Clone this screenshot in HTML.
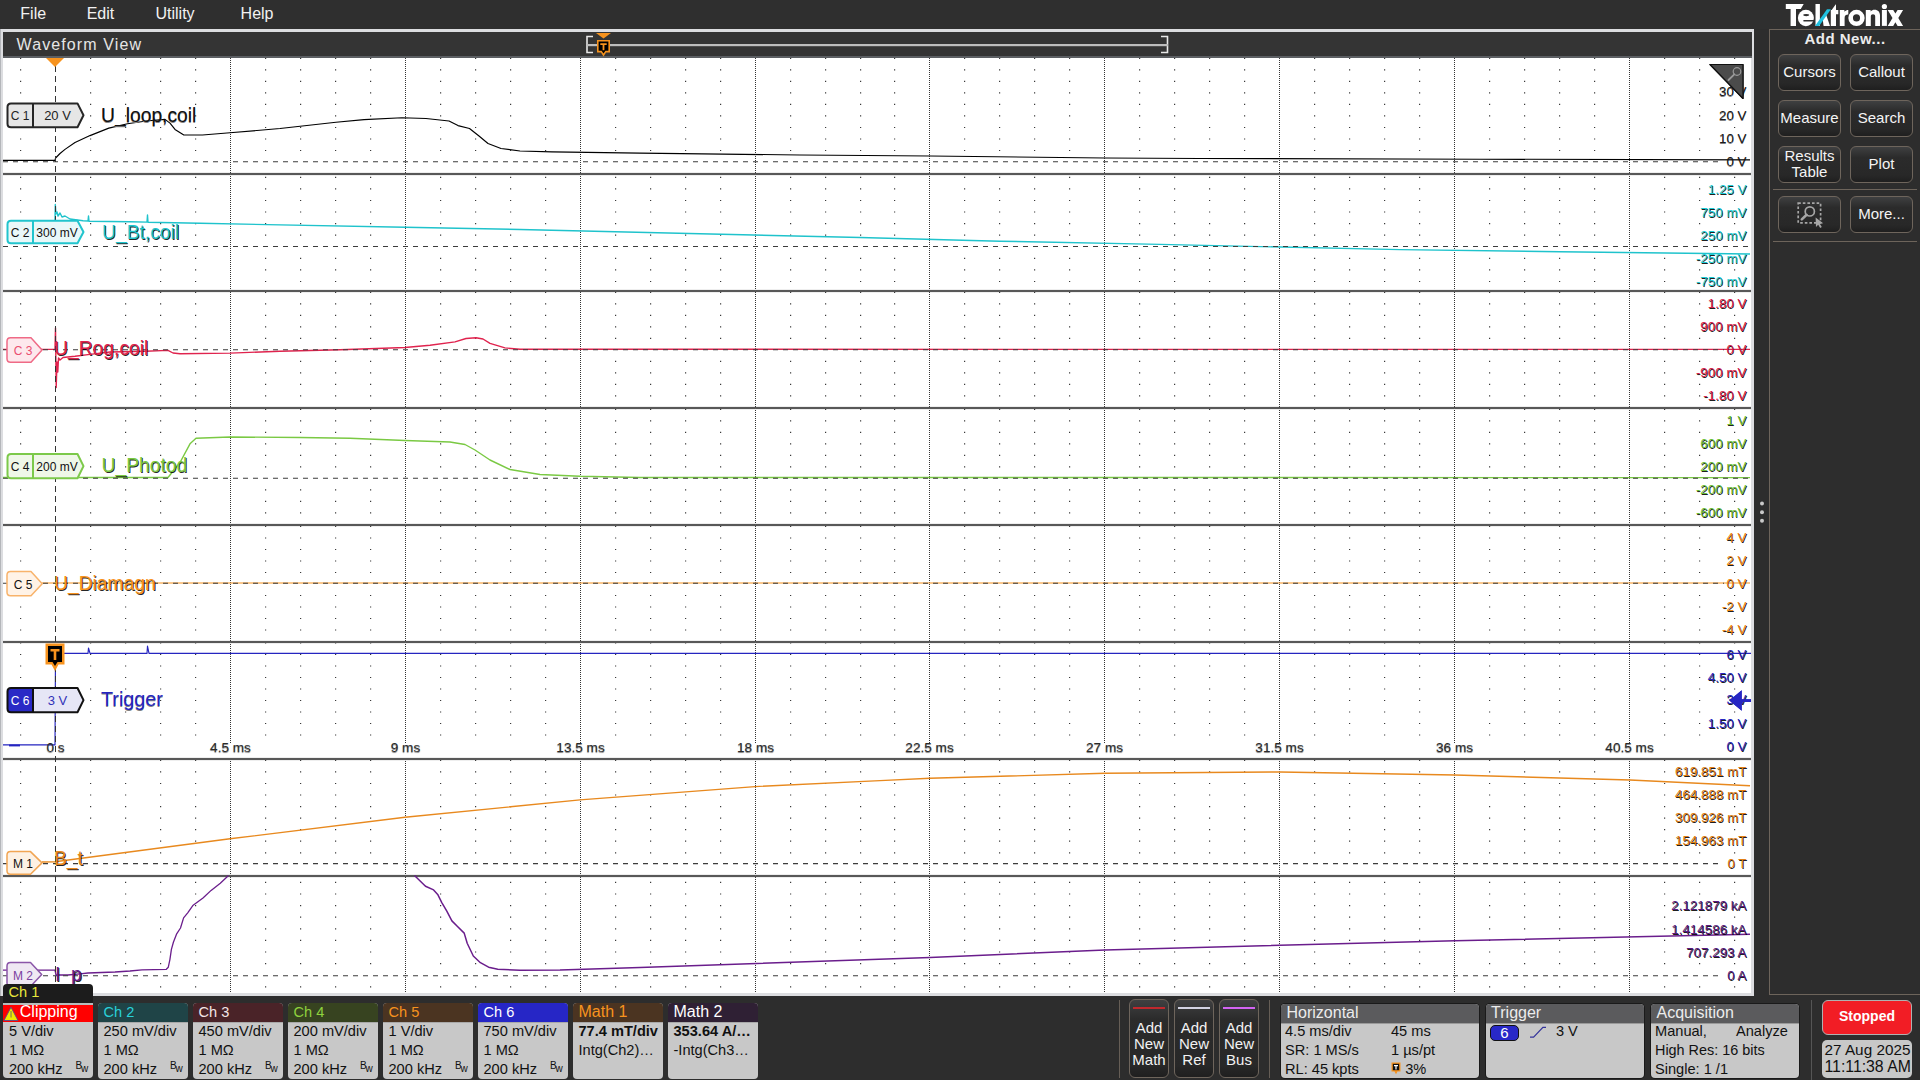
<!DOCTYPE html>
<html><head><meta charset="utf-8"><title>Waveform View</title>
<style>
html,body{margin:0;padding:0}
body{width:1920px;height:1080px;overflow:hidden;position:relative;background:#2d2d2d;font-family:'Liberation Sans', sans-serif}
.t{position:absolute;white-space:nowrap;line-height:1;font-family:'Liberation Sans', sans-serif}
</style></head><body>
<div style="position:absolute;left:0;top:0;width:1920px;height:29px;background:#2f2f2f"></div>
<div class="t" style="left:20.3px;top:6.4px;font-size:16px;color:#f2f2f2;font-weight:normal;">File</div>
<div class="t" style="left:86.7px;top:6.4px;font-size:16px;color:#f2f2f2;font-weight:normal;">Edit</div>
<div class="t" style="left:155.5px;top:6.4px;font-size:16px;color:#f2f2f2;font-weight:normal;">Utility</div>
<div class="t" style="left:240.6px;top:6.4px;font-size:16px;color:#f2f2f2;font-weight:normal;">Help</div>
<svg width="1920" height="30" style="position:absolute;left:0;top:0"><g fill="#ffffff"><path d="M1785.8 4 H1803.7 L1800.8 9.1 H1796 V25.9 H1790.6 V9.1 H1785.8 Z"/><ellipse cx="1805.9" cy="18" rx="8" ry="8.2"/><rect x="1815.5" y="4" width="4.4" height="21.9"/><path d="M1822.6 18.2 L1825.8 13.8 L1830 25.9 H1823.6 Z"/><path d="M1830.8 10 H1831.7 L1835.6 4.6 H1836 V10 H1838.3 V14.2 H1836 V25.9 H1830.8 Z"/><path d="M1839.8 25.9 V10 H1844.4 V11.8 C1845.4 10.4 1846.8 9.9 1848.3 9.9 V14.6 C1846 14.6 1844.6 15.6 1844.6 18 V25.9 Z"/><circle cx="1856.5" cy="17.9" r="5.85" fill="none" stroke="#ffffff" stroke-width="4.6"/><path d="M1865.8 25.9 V10 H1870.6 V11.6 C1871.6 10.4 1873 9.8 1874.6 9.8 C1878 9.8 1880 12 1880 15.6 V25.9 H1875.2 V16.6 C1875.2 15 1874.3 14.2 1873 14.2 C1871.7 14.2 1870.8 15 1870.8 16.6 V25.9 Z"/><rect x="1881.9" y="10" width="5" height="15.9"/><circle cx="1884.4" cy="6.5" r="2.6"/><path d="M1887.7 10 H1893.2 L1895.4 13.6 L1897.6 10 H1903.1 L1898.3 17.95 L1903.1 25.9 H1897.6 L1895.4 22.3 L1893.2 25.9 H1887.7 L1892.5 17.95 Z"/></g><ellipse cx="1806.2" cy="15.1" rx="3.1" ry="1.05" fill="#303030"/><path d="M1803.6 19.9 H1814 V21.5 H1803.6 Q1802.9 20.7 1803.6 19.9 Z" fill="#303030"/><path d="M1827 9.3 H1830.9 L1819.2 25.9 H1815 Z" fill="#1fc0e0"/></svg>
<div style="position:absolute;left:0;top:29px;width:1754px;height:967px;background:#dcdde0"></div>
<div style="position:absolute;left:0;top:29px;width:1px;height:967px;background:#b4b6ba"></div>
<div style="position:absolute;left:3px;top:32px;width:1749px;height:24px;background:#343434"></div>
<div style="position:absolute;left:3px;top:56px;width:1749px;height:2px;background:#5c5f63"></div>
<div style="position:absolute;left:3px;top:58px;width:1748px;height:935px;background:#ffffff"></div>
<div class="t" style="left:16.6px;top:36.7px;font-size:16px;color:#e6e6e6;font-weight:normal;letter-spacing:1.1px">Waveform View</div>
<svg width="1920" height="60" style="position:absolute;left:0;top:0"><path d="M593 36.5 H587 V52.5 H593" fill="none" stroke="#e8e8e8" stroke-width="1.6"/><path d="M1161 36.5 H1167.5 V52.5 H1161" fill="none" stroke="#e8e8e8" stroke-width="1.6"/><rect x="587" y="44" width="581" height="2.2" fill="#bdbdbd"/><path d="M596 33 L611 33 L603.5 38.5 Z" fill="#f7931e"/><path d="M597 40 h13 v12.5 h-4 l-2.5 4 l-2.5 -4 h-4 z" fill="#f7931e"/><path d="M598.6 41.6 h9.8 v9.2 h-3 l-1.9 2.6 l-1.9 -2.6 h-3 z" fill="#000"/><path d="M600.3 43.2 h6.4 v1.8 h-2.3 v5.2 h-1.8 v-5.2 h-2.3 z" fill="#f7931e"/></svg>
<svg width="1920" height="1080" viewBox="0 0 1920 1080" style="position:absolute;left:0;top:0"><defs><clipPath id="pc"><rect x="3" y="58" width="1748" height="935"/></clipPath></defs><g clip-path="url(#pc)"><path d="M20 57.7h1.2v1.2h-1.2zM90 57.7h1.2v1.2h-1.2zM125 57.7h1.2v1.2h-1.2zM160 57.7h1.2v1.2h-1.2zM195 57.7h1.2v1.2h-1.2zM265 57.7h1.2v1.2h-1.2zM300 57.7h1.2v1.2h-1.2zM335 57.7h1.2v1.2h-1.2zM370 57.7h1.2v1.2h-1.2zM440 57.7h1.2v1.2h-1.2zM475 57.7h1.2v1.2h-1.2zM510 57.7h1.2v1.2h-1.2zM545 57.7h1.2v1.2h-1.2zM615 57.7h1.2v1.2h-1.2zM650 57.7h1.2v1.2h-1.2zM685 57.7h1.2v1.2h-1.2zM720 57.7h1.2v1.2h-1.2zM790 57.7h1.2v1.2h-1.2zM825 57.7h1.2v1.2h-1.2zM860 57.7h1.2v1.2h-1.2zM894 57.7h1.2v1.2h-1.2zM964 57.7h1.2v1.2h-1.2zM999 57.7h1.2v1.2h-1.2zM1034 57.7h1.2v1.2h-1.2zM1069 57.7h1.2v1.2h-1.2zM1139 57.7h1.2v1.2h-1.2zM1174 57.7h1.2v1.2h-1.2zM1209 57.7h1.2v1.2h-1.2zM1244 57.7h1.2v1.2h-1.2zM1314 57.7h1.2v1.2h-1.2zM1349 57.7h1.2v1.2h-1.2zM1384 57.7h1.2v1.2h-1.2zM1419 57.7h1.2v1.2h-1.2zM1489 57.7h1.2v1.2h-1.2zM1524 57.7h1.2v1.2h-1.2zM1559 57.7h1.2v1.2h-1.2zM1594 57.7h1.2v1.2h-1.2zM1664 57.7h1.2v1.2h-1.2zM1699 57.7h1.2v1.2h-1.2zM1734 57.7h1.2v1.2h-1.2zM20 69.2h1.2v1.2h-1.2zM90 69.2h1.2v1.2h-1.2zM125 69.2h1.2v1.2h-1.2zM160 69.2h1.2v1.2h-1.2zM195 69.2h1.2v1.2h-1.2zM265 69.2h1.2v1.2h-1.2zM300 69.2h1.2v1.2h-1.2zM335 69.2h1.2v1.2h-1.2zM370 69.2h1.2v1.2h-1.2zM440 69.2h1.2v1.2h-1.2zM475 69.2h1.2v1.2h-1.2zM510 69.2h1.2v1.2h-1.2zM545 69.2h1.2v1.2h-1.2zM615 69.2h1.2v1.2h-1.2zM650 69.2h1.2v1.2h-1.2zM685 69.2h1.2v1.2h-1.2zM720 69.2h1.2v1.2h-1.2zM790 69.2h1.2v1.2h-1.2zM825 69.2h1.2v1.2h-1.2zM860 69.2h1.2v1.2h-1.2zM894 69.2h1.2v1.2h-1.2zM964 69.2h1.2v1.2h-1.2zM999 69.2h1.2v1.2h-1.2zM1034 69.2h1.2v1.2h-1.2zM1069 69.2h1.2v1.2h-1.2zM1139 69.2h1.2v1.2h-1.2zM1174 69.2h1.2v1.2h-1.2zM1209 69.2h1.2v1.2h-1.2zM1244 69.2h1.2v1.2h-1.2zM1314 69.2h1.2v1.2h-1.2zM1349 69.2h1.2v1.2h-1.2zM1384 69.2h1.2v1.2h-1.2zM1419 69.2h1.2v1.2h-1.2zM1489 69.2h1.2v1.2h-1.2zM1524 69.2h1.2v1.2h-1.2zM1559 69.2h1.2v1.2h-1.2zM1594 69.2h1.2v1.2h-1.2zM1664 69.2h1.2v1.2h-1.2zM1699 69.2h1.2v1.2h-1.2zM1734 69.2h1.2v1.2h-1.2zM20 80.8h1.2v1.2h-1.2zM90 80.8h1.2v1.2h-1.2zM125 80.8h1.2v1.2h-1.2zM160 80.8h1.2v1.2h-1.2zM195 80.8h1.2v1.2h-1.2zM265 80.8h1.2v1.2h-1.2zM300 80.8h1.2v1.2h-1.2zM335 80.8h1.2v1.2h-1.2zM370 80.8h1.2v1.2h-1.2zM440 80.8h1.2v1.2h-1.2zM475 80.8h1.2v1.2h-1.2zM510 80.8h1.2v1.2h-1.2zM545 80.8h1.2v1.2h-1.2zM615 80.8h1.2v1.2h-1.2zM650 80.8h1.2v1.2h-1.2zM685 80.8h1.2v1.2h-1.2zM720 80.8h1.2v1.2h-1.2zM790 80.8h1.2v1.2h-1.2zM825 80.8h1.2v1.2h-1.2zM860 80.8h1.2v1.2h-1.2zM894 80.8h1.2v1.2h-1.2zM964 80.8h1.2v1.2h-1.2zM999 80.8h1.2v1.2h-1.2zM1034 80.8h1.2v1.2h-1.2zM1069 80.8h1.2v1.2h-1.2zM1139 80.8h1.2v1.2h-1.2zM1174 80.8h1.2v1.2h-1.2zM1209 80.8h1.2v1.2h-1.2zM1244 80.8h1.2v1.2h-1.2zM1314 80.8h1.2v1.2h-1.2zM1349 80.8h1.2v1.2h-1.2zM1384 80.8h1.2v1.2h-1.2zM1419 80.8h1.2v1.2h-1.2zM1489 80.8h1.2v1.2h-1.2zM1524 80.8h1.2v1.2h-1.2zM1559 80.8h1.2v1.2h-1.2zM1594 80.8h1.2v1.2h-1.2zM1664 80.8h1.2v1.2h-1.2zM1699 80.8h1.2v1.2h-1.2zM1734 80.8h1.2v1.2h-1.2zM20 92.3h1.2v1.2h-1.2zM90 92.3h1.2v1.2h-1.2zM125 92.3h1.2v1.2h-1.2zM160 92.3h1.2v1.2h-1.2zM195 92.3h1.2v1.2h-1.2zM265 92.3h1.2v1.2h-1.2zM300 92.3h1.2v1.2h-1.2zM335 92.3h1.2v1.2h-1.2zM370 92.3h1.2v1.2h-1.2zM440 92.3h1.2v1.2h-1.2zM475 92.3h1.2v1.2h-1.2zM510 92.3h1.2v1.2h-1.2zM545 92.3h1.2v1.2h-1.2zM615 92.3h1.2v1.2h-1.2zM650 92.3h1.2v1.2h-1.2zM685 92.3h1.2v1.2h-1.2zM720 92.3h1.2v1.2h-1.2zM790 92.3h1.2v1.2h-1.2zM825 92.3h1.2v1.2h-1.2zM860 92.3h1.2v1.2h-1.2zM894 92.3h1.2v1.2h-1.2zM964 92.3h1.2v1.2h-1.2zM999 92.3h1.2v1.2h-1.2zM1034 92.3h1.2v1.2h-1.2zM1069 92.3h1.2v1.2h-1.2zM1139 92.3h1.2v1.2h-1.2zM1174 92.3h1.2v1.2h-1.2zM1209 92.3h1.2v1.2h-1.2zM1244 92.3h1.2v1.2h-1.2zM1314 92.3h1.2v1.2h-1.2zM1349 92.3h1.2v1.2h-1.2zM1384 92.3h1.2v1.2h-1.2zM1419 92.3h1.2v1.2h-1.2zM1489 92.3h1.2v1.2h-1.2zM1524 92.3h1.2v1.2h-1.2zM1559 92.3h1.2v1.2h-1.2zM1594 92.3h1.2v1.2h-1.2zM1664 92.3h1.2v1.2h-1.2zM1699 92.3h1.2v1.2h-1.2zM20 103.8h1.2v1.2h-1.2zM90 103.8h1.2v1.2h-1.2zM125 103.8h1.2v1.2h-1.2zM160 103.8h1.2v1.2h-1.2zM195 103.8h1.2v1.2h-1.2zM265 103.8h1.2v1.2h-1.2zM300 103.8h1.2v1.2h-1.2zM335 103.8h1.2v1.2h-1.2zM370 103.8h1.2v1.2h-1.2zM440 103.8h1.2v1.2h-1.2zM475 103.8h1.2v1.2h-1.2zM510 103.8h1.2v1.2h-1.2zM545 103.8h1.2v1.2h-1.2zM615 103.8h1.2v1.2h-1.2zM650 103.8h1.2v1.2h-1.2zM685 103.8h1.2v1.2h-1.2zM720 103.8h1.2v1.2h-1.2zM790 103.8h1.2v1.2h-1.2zM825 103.8h1.2v1.2h-1.2zM860 103.8h1.2v1.2h-1.2zM894 103.8h1.2v1.2h-1.2zM964 103.8h1.2v1.2h-1.2zM999 103.8h1.2v1.2h-1.2zM1034 103.8h1.2v1.2h-1.2zM1069 103.8h1.2v1.2h-1.2zM1139 103.8h1.2v1.2h-1.2zM1174 103.8h1.2v1.2h-1.2zM1209 103.8h1.2v1.2h-1.2zM1244 103.8h1.2v1.2h-1.2zM1314 103.8h1.2v1.2h-1.2zM1349 103.8h1.2v1.2h-1.2zM1384 103.8h1.2v1.2h-1.2zM1419 103.8h1.2v1.2h-1.2zM1489 103.8h1.2v1.2h-1.2zM1524 103.8h1.2v1.2h-1.2zM1559 103.8h1.2v1.2h-1.2zM1594 103.8h1.2v1.2h-1.2zM1664 103.8h1.2v1.2h-1.2zM1699 103.8h1.2v1.2h-1.2zM1734 103.8h1.2v1.2h-1.2zM20 115.3h1.2v1.2h-1.2zM90 115.3h1.2v1.2h-1.2zM125 115.3h1.2v1.2h-1.2zM160 115.3h1.2v1.2h-1.2zM195 115.3h1.2v1.2h-1.2zM265 115.3h1.2v1.2h-1.2zM300 115.3h1.2v1.2h-1.2zM335 115.3h1.2v1.2h-1.2zM370 115.3h1.2v1.2h-1.2zM440 115.3h1.2v1.2h-1.2zM475 115.3h1.2v1.2h-1.2zM510 115.3h1.2v1.2h-1.2zM545 115.3h1.2v1.2h-1.2zM615 115.3h1.2v1.2h-1.2zM650 115.3h1.2v1.2h-1.2zM685 115.3h1.2v1.2h-1.2zM720 115.3h1.2v1.2h-1.2zM790 115.3h1.2v1.2h-1.2zM825 115.3h1.2v1.2h-1.2zM860 115.3h1.2v1.2h-1.2zM894 115.3h1.2v1.2h-1.2zM964 115.3h1.2v1.2h-1.2zM999 115.3h1.2v1.2h-1.2zM1034 115.3h1.2v1.2h-1.2zM1069 115.3h1.2v1.2h-1.2zM1139 115.3h1.2v1.2h-1.2zM1174 115.3h1.2v1.2h-1.2zM1209 115.3h1.2v1.2h-1.2zM1244 115.3h1.2v1.2h-1.2zM1314 115.3h1.2v1.2h-1.2zM1349 115.3h1.2v1.2h-1.2zM1384 115.3h1.2v1.2h-1.2zM1419 115.3h1.2v1.2h-1.2zM1489 115.3h1.2v1.2h-1.2zM1524 115.3h1.2v1.2h-1.2zM1559 115.3h1.2v1.2h-1.2zM1594 115.3h1.2v1.2h-1.2zM1664 115.3h1.2v1.2h-1.2zM1699 115.3h1.2v1.2h-1.2zM20 126.9h1.2v1.2h-1.2zM90 126.9h1.2v1.2h-1.2zM125 126.9h1.2v1.2h-1.2zM160 126.9h1.2v1.2h-1.2zM195 126.9h1.2v1.2h-1.2zM265 126.9h1.2v1.2h-1.2zM300 126.9h1.2v1.2h-1.2zM335 126.9h1.2v1.2h-1.2zM370 126.9h1.2v1.2h-1.2zM440 126.9h1.2v1.2h-1.2zM475 126.9h1.2v1.2h-1.2zM510 126.9h1.2v1.2h-1.2zM545 126.9h1.2v1.2h-1.2zM615 126.9h1.2v1.2h-1.2zM650 126.9h1.2v1.2h-1.2zM685 126.9h1.2v1.2h-1.2zM720 126.9h1.2v1.2h-1.2zM790 126.9h1.2v1.2h-1.2zM825 126.9h1.2v1.2h-1.2zM860 126.9h1.2v1.2h-1.2zM894 126.9h1.2v1.2h-1.2zM964 126.9h1.2v1.2h-1.2zM999 126.9h1.2v1.2h-1.2zM1034 126.9h1.2v1.2h-1.2zM1069 126.9h1.2v1.2h-1.2zM1139 126.9h1.2v1.2h-1.2zM1174 126.9h1.2v1.2h-1.2zM1209 126.9h1.2v1.2h-1.2zM1244 126.9h1.2v1.2h-1.2zM1314 126.9h1.2v1.2h-1.2zM1349 126.9h1.2v1.2h-1.2zM1384 126.9h1.2v1.2h-1.2zM1419 126.9h1.2v1.2h-1.2zM1489 126.9h1.2v1.2h-1.2zM1524 126.9h1.2v1.2h-1.2zM1559 126.9h1.2v1.2h-1.2zM1594 126.9h1.2v1.2h-1.2zM1664 126.9h1.2v1.2h-1.2zM1699 126.9h1.2v1.2h-1.2zM1734 126.9h1.2v1.2h-1.2zM20 138.4h1.2v1.2h-1.2zM90 138.4h1.2v1.2h-1.2zM125 138.4h1.2v1.2h-1.2zM160 138.4h1.2v1.2h-1.2zM195 138.4h1.2v1.2h-1.2zM265 138.4h1.2v1.2h-1.2zM300 138.4h1.2v1.2h-1.2zM335 138.4h1.2v1.2h-1.2zM370 138.4h1.2v1.2h-1.2zM440 138.4h1.2v1.2h-1.2zM475 138.4h1.2v1.2h-1.2zM510 138.4h1.2v1.2h-1.2zM545 138.4h1.2v1.2h-1.2zM615 138.4h1.2v1.2h-1.2zM650 138.4h1.2v1.2h-1.2zM685 138.4h1.2v1.2h-1.2zM720 138.4h1.2v1.2h-1.2zM790 138.4h1.2v1.2h-1.2zM825 138.4h1.2v1.2h-1.2zM860 138.4h1.2v1.2h-1.2zM894 138.4h1.2v1.2h-1.2zM964 138.4h1.2v1.2h-1.2zM999 138.4h1.2v1.2h-1.2zM1034 138.4h1.2v1.2h-1.2zM1069 138.4h1.2v1.2h-1.2zM1139 138.4h1.2v1.2h-1.2zM1174 138.4h1.2v1.2h-1.2zM1209 138.4h1.2v1.2h-1.2zM1244 138.4h1.2v1.2h-1.2zM1314 138.4h1.2v1.2h-1.2zM1349 138.4h1.2v1.2h-1.2zM1384 138.4h1.2v1.2h-1.2zM1419 138.4h1.2v1.2h-1.2zM1489 138.4h1.2v1.2h-1.2zM1524 138.4h1.2v1.2h-1.2zM1559 138.4h1.2v1.2h-1.2zM1594 138.4h1.2v1.2h-1.2zM1664 138.4h1.2v1.2h-1.2zM1699 138.4h1.2v1.2h-1.2zM20 149.9h1.2v1.2h-1.2zM90 149.9h1.2v1.2h-1.2zM125 149.9h1.2v1.2h-1.2zM160 149.9h1.2v1.2h-1.2zM195 149.9h1.2v1.2h-1.2zM265 149.9h1.2v1.2h-1.2zM300 149.9h1.2v1.2h-1.2zM335 149.9h1.2v1.2h-1.2zM370 149.9h1.2v1.2h-1.2zM440 149.9h1.2v1.2h-1.2zM475 149.9h1.2v1.2h-1.2zM510 149.9h1.2v1.2h-1.2zM545 149.9h1.2v1.2h-1.2zM615 149.9h1.2v1.2h-1.2zM650 149.9h1.2v1.2h-1.2zM685 149.9h1.2v1.2h-1.2zM720 149.9h1.2v1.2h-1.2zM790 149.9h1.2v1.2h-1.2zM825 149.9h1.2v1.2h-1.2zM860 149.9h1.2v1.2h-1.2zM894 149.9h1.2v1.2h-1.2zM964 149.9h1.2v1.2h-1.2zM999 149.9h1.2v1.2h-1.2zM1034 149.9h1.2v1.2h-1.2zM1069 149.9h1.2v1.2h-1.2zM1139 149.9h1.2v1.2h-1.2zM1174 149.9h1.2v1.2h-1.2zM1209 149.9h1.2v1.2h-1.2zM1244 149.9h1.2v1.2h-1.2zM1314 149.9h1.2v1.2h-1.2zM1349 149.9h1.2v1.2h-1.2zM1384 149.9h1.2v1.2h-1.2zM1419 149.9h1.2v1.2h-1.2zM1489 149.9h1.2v1.2h-1.2zM1524 149.9h1.2v1.2h-1.2zM1559 149.9h1.2v1.2h-1.2zM1594 149.9h1.2v1.2h-1.2zM1664 149.9h1.2v1.2h-1.2zM1699 149.9h1.2v1.2h-1.2zM1734 149.9h1.2v1.2h-1.2zM20 176.7h1.2v1.2h-1.2zM90 176.7h1.2v1.2h-1.2zM125 176.7h1.2v1.2h-1.2zM160 176.7h1.2v1.2h-1.2zM195 176.7h1.2v1.2h-1.2zM265 176.7h1.2v1.2h-1.2zM300 176.7h1.2v1.2h-1.2zM335 176.7h1.2v1.2h-1.2zM370 176.7h1.2v1.2h-1.2zM440 176.7h1.2v1.2h-1.2zM475 176.7h1.2v1.2h-1.2zM510 176.7h1.2v1.2h-1.2zM545 176.7h1.2v1.2h-1.2zM615 176.7h1.2v1.2h-1.2zM650 176.7h1.2v1.2h-1.2zM685 176.7h1.2v1.2h-1.2zM720 176.7h1.2v1.2h-1.2zM790 176.7h1.2v1.2h-1.2zM825 176.7h1.2v1.2h-1.2zM860 176.7h1.2v1.2h-1.2zM894 176.7h1.2v1.2h-1.2zM964 176.7h1.2v1.2h-1.2zM999 176.7h1.2v1.2h-1.2zM1034 176.7h1.2v1.2h-1.2zM1069 176.7h1.2v1.2h-1.2zM1139 176.7h1.2v1.2h-1.2zM1174 176.7h1.2v1.2h-1.2zM1209 176.7h1.2v1.2h-1.2zM1244 176.7h1.2v1.2h-1.2zM1314 176.7h1.2v1.2h-1.2zM1349 176.7h1.2v1.2h-1.2zM1384 176.7h1.2v1.2h-1.2zM1419 176.7h1.2v1.2h-1.2zM1489 176.7h1.2v1.2h-1.2zM1524 176.7h1.2v1.2h-1.2zM1559 176.7h1.2v1.2h-1.2zM1594 176.7h1.2v1.2h-1.2zM1664 176.7h1.2v1.2h-1.2zM1699 176.7h1.2v1.2h-1.2zM1734 176.7h1.2v1.2h-1.2zM20 188.3h1.2v1.2h-1.2zM90 188.3h1.2v1.2h-1.2zM125 188.3h1.2v1.2h-1.2zM160 188.3h1.2v1.2h-1.2zM195 188.3h1.2v1.2h-1.2zM265 188.3h1.2v1.2h-1.2zM300 188.3h1.2v1.2h-1.2zM335 188.3h1.2v1.2h-1.2zM370 188.3h1.2v1.2h-1.2zM440 188.3h1.2v1.2h-1.2zM475 188.3h1.2v1.2h-1.2zM510 188.3h1.2v1.2h-1.2zM545 188.3h1.2v1.2h-1.2zM615 188.3h1.2v1.2h-1.2zM650 188.3h1.2v1.2h-1.2zM685 188.3h1.2v1.2h-1.2zM720 188.3h1.2v1.2h-1.2zM790 188.3h1.2v1.2h-1.2zM825 188.3h1.2v1.2h-1.2zM860 188.3h1.2v1.2h-1.2zM894 188.3h1.2v1.2h-1.2zM964 188.3h1.2v1.2h-1.2zM999 188.3h1.2v1.2h-1.2zM1034 188.3h1.2v1.2h-1.2zM1069 188.3h1.2v1.2h-1.2zM1139 188.3h1.2v1.2h-1.2zM1174 188.3h1.2v1.2h-1.2zM1209 188.3h1.2v1.2h-1.2zM1244 188.3h1.2v1.2h-1.2zM1314 188.3h1.2v1.2h-1.2zM1349 188.3h1.2v1.2h-1.2zM1384 188.3h1.2v1.2h-1.2zM1419 188.3h1.2v1.2h-1.2zM1489 188.3h1.2v1.2h-1.2zM1524 188.3h1.2v1.2h-1.2zM1559 188.3h1.2v1.2h-1.2zM1594 188.3h1.2v1.2h-1.2zM1664 188.3h1.2v1.2h-1.2zM1699 188.3h1.2v1.2h-1.2zM20 199.9h1.2v1.2h-1.2zM90 199.9h1.2v1.2h-1.2zM125 199.9h1.2v1.2h-1.2zM160 199.9h1.2v1.2h-1.2zM195 199.9h1.2v1.2h-1.2zM265 199.9h1.2v1.2h-1.2zM300 199.9h1.2v1.2h-1.2zM335 199.9h1.2v1.2h-1.2zM370 199.9h1.2v1.2h-1.2zM440 199.9h1.2v1.2h-1.2zM475 199.9h1.2v1.2h-1.2zM510 199.9h1.2v1.2h-1.2zM545 199.9h1.2v1.2h-1.2zM615 199.9h1.2v1.2h-1.2zM650 199.9h1.2v1.2h-1.2zM685 199.9h1.2v1.2h-1.2zM720 199.9h1.2v1.2h-1.2zM790 199.9h1.2v1.2h-1.2zM825 199.9h1.2v1.2h-1.2zM860 199.9h1.2v1.2h-1.2zM894 199.9h1.2v1.2h-1.2zM964 199.9h1.2v1.2h-1.2zM999 199.9h1.2v1.2h-1.2zM1034 199.9h1.2v1.2h-1.2zM1069 199.9h1.2v1.2h-1.2zM1139 199.9h1.2v1.2h-1.2zM1174 199.9h1.2v1.2h-1.2zM1209 199.9h1.2v1.2h-1.2zM1244 199.9h1.2v1.2h-1.2zM1314 199.9h1.2v1.2h-1.2zM1349 199.9h1.2v1.2h-1.2zM1384 199.9h1.2v1.2h-1.2zM1419 199.9h1.2v1.2h-1.2zM1489 199.9h1.2v1.2h-1.2zM1524 199.9h1.2v1.2h-1.2zM1559 199.9h1.2v1.2h-1.2zM1594 199.9h1.2v1.2h-1.2zM1664 199.9h1.2v1.2h-1.2zM1699 199.9h1.2v1.2h-1.2zM1734 199.9h1.2v1.2h-1.2zM20 211.4h1.2v1.2h-1.2zM90 211.4h1.2v1.2h-1.2zM125 211.4h1.2v1.2h-1.2zM160 211.4h1.2v1.2h-1.2zM195 211.4h1.2v1.2h-1.2zM265 211.4h1.2v1.2h-1.2zM300 211.4h1.2v1.2h-1.2zM335 211.4h1.2v1.2h-1.2zM370 211.4h1.2v1.2h-1.2zM440 211.4h1.2v1.2h-1.2zM475 211.4h1.2v1.2h-1.2zM510 211.4h1.2v1.2h-1.2zM545 211.4h1.2v1.2h-1.2zM615 211.4h1.2v1.2h-1.2zM650 211.4h1.2v1.2h-1.2zM685 211.4h1.2v1.2h-1.2zM720 211.4h1.2v1.2h-1.2zM790 211.4h1.2v1.2h-1.2zM825 211.4h1.2v1.2h-1.2zM860 211.4h1.2v1.2h-1.2zM894 211.4h1.2v1.2h-1.2zM964 211.4h1.2v1.2h-1.2zM999 211.4h1.2v1.2h-1.2zM1034 211.4h1.2v1.2h-1.2zM1069 211.4h1.2v1.2h-1.2zM1139 211.4h1.2v1.2h-1.2zM1174 211.4h1.2v1.2h-1.2zM1209 211.4h1.2v1.2h-1.2zM1244 211.4h1.2v1.2h-1.2zM1314 211.4h1.2v1.2h-1.2zM1349 211.4h1.2v1.2h-1.2zM1384 211.4h1.2v1.2h-1.2zM1419 211.4h1.2v1.2h-1.2zM1489 211.4h1.2v1.2h-1.2zM1524 211.4h1.2v1.2h-1.2zM1559 211.4h1.2v1.2h-1.2zM1594 211.4h1.2v1.2h-1.2zM1664 211.4h1.2v1.2h-1.2zM20 223.0h1.2v1.2h-1.2zM90 223.0h1.2v1.2h-1.2zM125 223.0h1.2v1.2h-1.2zM160 223.0h1.2v1.2h-1.2zM195 223.0h1.2v1.2h-1.2zM265 223.0h1.2v1.2h-1.2zM300 223.0h1.2v1.2h-1.2zM335 223.0h1.2v1.2h-1.2zM370 223.0h1.2v1.2h-1.2zM440 223.0h1.2v1.2h-1.2zM475 223.0h1.2v1.2h-1.2zM510 223.0h1.2v1.2h-1.2zM545 223.0h1.2v1.2h-1.2zM615 223.0h1.2v1.2h-1.2zM650 223.0h1.2v1.2h-1.2zM685 223.0h1.2v1.2h-1.2zM720 223.0h1.2v1.2h-1.2zM790 223.0h1.2v1.2h-1.2zM825 223.0h1.2v1.2h-1.2zM860 223.0h1.2v1.2h-1.2zM894 223.0h1.2v1.2h-1.2zM964 223.0h1.2v1.2h-1.2zM999 223.0h1.2v1.2h-1.2zM1034 223.0h1.2v1.2h-1.2zM1069 223.0h1.2v1.2h-1.2zM1139 223.0h1.2v1.2h-1.2zM1174 223.0h1.2v1.2h-1.2zM1209 223.0h1.2v1.2h-1.2zM1244 223.0h1.2v1.2h-1.2zM1314 223.0h1.2v1.2h-1.2zM1349 223.0h1.2v1.2h-1.2zM1384 223.0h1.2v1.2h-1.2zM1419 223.0h1.2v1.2h-1.2zM1489 223.0h1.2v1.2h-1.2zM1524 223.0h1.2v1.2h-1.2zM1559 223.0h1.2v1.2h-1.2zM1594 223.0h1.2v1.2h-1.2zM1664 223.0h1.2v1.2h-1.2zM1699 223.0h1.2v1.2h-1.2zM1734 223.0h1.2v1.2h-1.2zM20 234.6h1.2v1.2h-1.2zM90 234.6h1.2v1.2h-1.2zM125 234.6h1.2v1.2h-1.2zM160 234.6h1.2v1.2h-1.2zM195 234.6h1.2v1.2h-1.2zM265 234.6h1.2v1.2h-1.2zM300 234.6h1.2v1.2h-1.2zM335 234.6h1.2v1.2h-1.2zM370 234.6h1.2v1.2h-1.2zM440 234.6h1.2v1.2h-1.2zM475 234.6h1.2v1.2h-1.2zM510 234.6h1.2v1.2h-1.2zM545 234.6h1.2v1.2h-1.2zM615 234.6h1.2v1.2h-1.2zM650 234.6h1.2v1.2h-1.2zM685 234.6h1.2v1.2h-1.2zM720 234.6h1.2v1.2h-1.2zM790 234.6h1.2v1.2h-1.2zM825 234.6h1.2v1.2h-1.2zM860 234.6h1.2v1.2h-1.2zM894 234.6h1.2v1.2h-1.2zM964 234.6h1.2v1.2h-1.2zM999 234.6h1.2v1.2h-1.2zM1034 234.6h1.2v1.2h-1.2zM1069 234.6h1.2v1.2h-1.2zM1139 234.6h1.2v1.2h-1.2zM1174 234.6h1.2v1.2h-1.2zM1209 234.6h1.2v1.2h-1.2zM1244 234.6h1.2v1.2h-1.2zM1314 234.6h1.2v1.2h-1.2zM1349 234.6h1.2v1.2h-1.2zM1384 234.6h1.2v1.2h-1.2zM1419 234.6h1.2v1.2h-1.2zM1489 234.6h1.2v1.2h-1.2zM1524 234.6h1.2v1.2h-1.2zM1559 234.6h1.2v1.2h-1.2zM1594 234.6h1.2v1.2h-1.2zM1664 234.6h1.2v1.2h-1.2zM20 257.8h1.2v1.2h-1.2zM90 257.8h1.2v1.2h-1.2zM125 257.8h1.2v1.2h-1.2zM160 257.8h1.2v1.2h-1.2zM195 257.8h1.2v1.2h-1.2zM265 257.8h1.2v1.2h-1.2zM300 257.8h1.2v1.2h-1.2zM335 257.8h1.2v1.2h-1.2zM370 257.8h1.2v1.2h-1.2zM440 257.8h1.2v1.2h-1.2zM475 257.8h1.2v1.2h-1.2zM510 257.8h1.2v1.2h-1.2zM545 257.8h1.2v1.2h-1.2zM615 257.8h1.2v1.2h-1.2zM650 257.8h1.2v1.2h-1.2zM685 257.8h1.2v1.2h-1.2zM720 257.8h1.2v1.2h-1.2zM790 257.8h1.2v1.2h-1.2zM825 257.8h1.2v1.2h-1.2zM860 257.8h1.2v1.2h-1.2zM894 257.8h1.2v1.2h-1.2zM964 257.8h1.2v1.2h-1.2zM999 257.8h1.2v1.2h-1.2zM1034 257.8h1.2v1.2h-1.2zM1069 257.8h1.2v1.2h-1.2zM1139 257.8h1.2v1.2h-1.2zM1174 257.8h1.2v1.2h-1.2zM1209 257.8h1.2v1.2h-1.2zM1244 257.8h1.2v1.2h-1.2zM1314 257.8h1.2v1.2h-1.2zM1349 257.8h1.2v1.2h-1.2zM1384 257.8h1.2v1.2h-1.2zM1419 257.8h1.2v1.2h-1.2zM1489 257.8h1.2v1.2h-1.2zM1524 257.8h1.2v1.2h-1.2zM1559 257.8h1.2v1.2h-1.2zM1594 257.8h1.2v1.2h-1.2zM1664 257.8h1.2v1.2h-1.2zM20 269.3h1.2v1.2h-1.2zM90 269.3h1.2v1.2h-1.2zM125 269.3h1.2v1.2h-1.2zM160 269.3h1.2v1.2h-1.2zM195 269.3h1.2v1.2h-1.2zM265 269.3h1.2v1.2h-1.2zM300 269.3h1.2v1.2h-1.2zM335 269.3h1.2v1.2h-1.2zM370 269.3h1.2v1.2h-1.2zM440 269.3h1.2v1.2h-1.2zM475 269.3h1.2v1.2h-1.2zM510 269.3h1.2v1.2h-1.2zM545 269.3h1.2v1.2h-1.2zM615 269.3h1.2v1.2h-1.2zM650 269.3h1.2v1.2h-1.2zM685 269.3h1.2v1.2h-1.2zM720 269.3h1.2v1.2h-1.2zM790 269.3h1.2v1.2h-1.2zM825 269.3h1.2v1.2h-1.2zM860 269.3h1.2v1.2h-1.2zM894 269.3h1.2v1.2h-1.2zM964 269.3h1.2v1.2h-1.2zM999 269.3h1.2v1.2h-1.2zM1034 269.3h1.2v1.2h-1.2zM1069 269.3h1.2v1.2h-1.2zM1139 269.3h1.2v1.2h-1.2zM1174 269.3h1.2v1.2h-1.2zM1209 269.3h1.2v1.2h-1.2zM1244 269.3h1.2v1.2h-1.2zM1314 269.3h1.2v1.2h-1.2zM1349 269.3h1.2v1.2h-1.2zM1384 269.3h1.2v1.2h-1.2zM1419 269.3h1.2v1.2h-1.2zM1489 269.3h1.2v1.2h-1.2zM1524 269.3h1.2v1.2h-1.2zM1559 269.3h1.2v1.2h-1.2zM1594 269.3h1.2v1.2h-1.2zM1664 269.3h1.2v1.2h-1.2zM1699 269.3h1.2v1.2h-1.2zM1734 269.3h1.2v1.2h-1.2zM20 280.9h1.2v1.2h-1.2zM90 280.9h1.2v1.2h-1.2zM125 280.9h1.2v1.2h-1.2zM160 280.9h1.2v1.2h-1.2zM195 280.9h1.2v1.2h-1.2zM265 280.9h1.2v1.2h-1.2zM300 280.9h1.2v1.2h-1.2zM335 280.9h1.2v1.2h-1.2zM370 280.9h1.2v1.2h-1.2zM440 280.9h1.2v1.2h-1.2zM475 280.9h1.2v1.2h-1.2zM510 280.9h1.2v1.2h-1.2zM545 280.9h1.2v1.2h-1.2zM615 280.9h1.2v1.2h-1.2zM650 280.9h1.2v1.2h-1.2zM685 280.9h1.2v1.2h-1.2zM720 280.9h1.2v1.2h-1.2zM790 280.9h1.2v1.2h-1.2zM825 280.9h1.2v1.2h-1.2zM860 280.9h1.2v1.2h-1.2zM894 280.9h1.2v1.2h-1.2zM964 280.9h1.2v1.2h-1.2zM999 280.9h1.2v1.2h-1.2zM1034 280.9h1.2v1.2h-1.2zM1069 280.9h1.2v1.2h-1.2zM1139 280.9h1.2v1.2h-1.2zM1174 280.9h1.2v1.2h-1.2zM1209 280.9h1.2v1.2h-1.2zM1244 280.9h1.2v1.2h-1.2zM1314 280.9h1.2v1.2h-1.2zM1349 280.9h1.2v1.2h-1.2zM1384 280.9h1.2v1.2h-1.2zM1419 280.9h1.2v1.2h-1.2zM1489 280.9h1.2v1.2h-1.2zM1524 280.9h1.2v1.2h-1.2zM1559 280.9h1.2v1.2h-1.2zM1594 280.9h1.2v1.2h-1.2zM1664 280.9h1.2v1.2h-1.2zM20 291.8h1.2v1.2h-1.2zM90 291.8h1.2v1.2h-1.2zM125 291.8h1.2v1.2h-1.2zM160 291.8h1.2v1.2h-1.2zM195 291.8h1.2v1.2h-1.2zM265 291.8h1.2v1.2h-1.2zM300 291.8h1.2v1.2h-1.2zM335 291.8h1.2v1.2h-1.2zM370 291.8h1.2v1.2h-1.2zM440 291.8h1.2v1.2h-1.2zM475 291.8h1.2v1.2h-1.2zM510 291.8h1.2v1.2h-1.2zM545 291.8h1.2v1.2h-1.2zM615 291.8h1.2v1.2h-1.2zM650 291.8h1.2v1.2h-1.2zM685 291.8h1.2v1.2h-1.2zM720 291.8h1.2v1.2h-1.2zM790 291.8h1.2v1.2h-1.2zM825 291.8h1.2v1.2h-1.2zM860 291.8h1.2v1.2h-1.2zM894 291.8h1.2v1.2h-1.2zM964 291.8h1.2v1.2h-1.2zM999 291.8h1.2v1.2h-1.2zM1034 291.8h1.2v1.2h-1.2zM1069 291.8h1.2v1.2h-1.2zM1139 291.8h1.2v1.2h-1.2zM1174 291.8h1.2v1.2h-1.2zM1209 291.8h1.2v1.2h-1.2zM1244 291.8h1.2v1.2h-1.2zM1314 291.8h1.2v1.2h-1.2zM1349 291.8h1.2v1.2h-1.2zM1384 291.8h1.2v1.2h-1.2zM1419 291.8h1.2v1.2h-1.2zM1489 291.8h1.2v1.2h-1.2zM1524 291.8h1.2v1.2h-1.2zM1559 291.8h1.2v1.2h-1.2zM1594 291.8h1.2v1.2h-1.2zM1664 291.8h1.2v1.2h-1.2zM1699 291.8h1.2v1.2h-1.2zM1734 291.8h1.2v1.2h-1.2zM20 303.3h1.2v1.2h-1.2zM90 303.3h1.2v1.2h-1.2zM125 303.3h1.2v1.2h-1.2zM160 303.3h1.2v1.2h-1.2zM195 303.3h1.2v1.2h-1.2zM265 303.3h1.2v1.2h-1.2zM300 303.3h1.2v1.2h-1.2zM335 303.3h1.2v1.2h-1.2zM370 303.3h1.2v1.2h-1.2zM440 303.3h1.2v1.2h-1.2zM475 303.3h1.2v1.2h-1.2zM510 303.3h1.2v1.2h-1.2zM545 303.3h1.2v1.2h-1.2zM615 303.3h1.2v1.2h-1.2zM650 303.3h1.2v1.2h-1.2zM685 303.3h1.2v1.2h-1.2zM720 303.3h1.2v1.2h-1.2zM790 303.3h1.2v1.2h-1.2zM825 303.3h1.2v1.2h-1.2zM860 303.3h1.2v1.2h-1.2zM894 303.3h1.2v1.2h-1.2zM964 303.3h1.2v1.2h-1.2zM999 303.3h1.2v1.2h-1.2zM1034 303.3h1.2v1.2h-1.2zM1069 303.3h1.2v1.2h-1.2zM1139 303.3h1.2v1.2h-1.2zM1174 303.3h1.2v1.2h-1.2zM1209 303.3h1.2v1.2h-1.2zM1244 303.3h1.2v1.2h-1.2zM1314 303.3h1.2v1.2h-1.2zM1349 303.3h1.2v1.2h-1.2zM1384 303.3h1.2v1.2h-1.2zM1419 303.3h1.2v1.2h-1.2zM1489 303.3h1.2v1.2h-1.2zM1524 303.3h1.2v1.2h-1.2zM1559 303.3h1.2v1.2h-1.2zM1594 303.3h1.2v1.2h-1.2zM1664 303.3h1.2v1.2h-1.2zM1699 303.3h1.2v1.2h-1.2zM20 314.8h1.2v1.2h-1.2zM90 314.8h1.2v1.2h-1.2zM125 314.8h1.2v1.2h-1.2zM160 314.8h1.2v1.2h-1.2zM195 314.8h1.2v1.2h-1.2zM265 314.8h1.2v1.2h-1.2zM300 314.8h1.2v1.2h-1.2zM335 314.8h1.2v1.2h-1.2zM370 314.8h1.2v1.2h-1.2zM440 314.8h1.2v1.2h-1.2zM475 314.8h1.2v1.2h-1.2zM510 314.8h1.2v1.2h-1.2zM545 314.8h1.2v1.2h-1.2zM615 314.8h1.2v1.2h-1.2zM650 314.8h1.2v1.2h-1.2zM685 314.8h1.2v1.2h-1.2zM720 314.8h1.2v1.2h-1.2zM790 314.8h1.2v1.2h-1.2zM825 314.8h1.2v1.2h-1.2zM860 314.8h1.2v1.2h-1.2zM894 314.8h1.2v1.2h-1.2zM964 314.8h1.2v1.2h-1.2zM999 314.8h1.2v1.2h-1.2zM1034 314.8h1.2v1.2h-1.2zM1069 314.8h1.2v1.2h-1.2zM1139 314.8h1.2v1.2h-1.2zM1174 314.8h1.2v1.2h-1.2zM1209 314.8h1.2v1.2h-1.2zM1244 314.8h1.2v1.2h-1.2zM1314 314.8h1.2v1.2h-1.2zM1349 314.8h1.2v1.2h-1.2zM1384 314.8h1.2v1.2h-1.2zM1419 314.8h1.2v1.2h-1.2zM1489 314.8h1.2v1.2h-1.2zM1524 314.8h1.2v1.2h-1.2zM1559 314.8h1.2v1.2h-1.2zM1594 314.8h1.2v1.2h-1.2zM1664 314.8h1.2v1.2h-1.2zM1699 314.8h1.2v1.2h-1.2zM1734 314.8h1.2v1.2h-1.2zM20 326.3h1.2v1.2h-1.2zM90 326.3h1.2v1.2h-1.2zM125 326.3h1.2v1.2h-1.2zM160 326.3h1.2v1.2h-1.2zM195 326.3h1.2v1.2h-1.2zM265 326.3h1.2v1.2h-1.2zM300 326.3h1.2v1.2h-1.2zM335 326.3h1.2v1.2h-1.2zM370 326.3h1.2v1.2h-1.2zM440 326.3h1.2v1.2h-1.2zM475 326.3h1.2v1.2h-1.2zM510 326.3h1.2v1.2h-1.2zM545 326.3h1.2v1.2h-1.2zM615 326.3h1.2v1.2h-1.2zM650 326.3h1.2v1.2h-1.2zM685 326.3h1.2v1.2h-1.2zM720 326.3h1.2v1.2h-1.2zM790 326.3h1.2v1.2h-1.2zM825 326.3h1.2v1.2h-1.2zM860 326.3h1.2v1.2h-1.2zM894 326.3h1.2v1.2h-1.2zM964 326.3h1.2v1.2h-1.2zM999 326.3h1.2v1.2h-1.2zM1034 326.3h1.2v1.2h-1.2zM1069 326.3h1.2v1.2h-1.2zM1139 326.3h1.2v1.2h-1.2zM1174 326.3h1.2v1.2h-1.2zM1209 326.3h1.2v1.2h-1.2zM1244 326.3h1.2v1.2h-1.2zM1314 326.3h1.2v1.2h-1.2zM1349 326.3h1.2v1.2h-1.2zM1384 326.3h1.2v1.2h-1.2zM1419 326.3h1.2v1.2h-1.2zM1489 326.3h1.2v1.2h-1.2zM1524 326.3h1.2v1.2h-1.2zM1559 326.3h1.2v1.2h-1.2zM1594 326.3h1.2v1.2h-1.2zM1664 326.3h1.2v1.2h-1.2zM20 337.8h1.2v1.2h-1.2zM90 337.8h1.2v1.2h-1.2zM125 337.8h1.2v1.2h-1.2zM160 337.8h1.2v1.2h-1.2zM195 337.8h1.2v1.2h-1.2zM265 337.8h1.2v1.2h-1.2zM300 337.8h1.2v1.2h-1.2zM335 337.8h1.2v1.2h-1.2zM370 337.8h1.2v1.2h-1.2zM440 337.8h1.2v1.2h-1.2zM475 337.8h1.2v1.2h-1.2zM510 337.8h1.2v1.2h-1.2zM545 337.8h1.2v1.2h-1.2zM615 337.8h1.2v1.2h-1.2zM650 337.8h1.2v1.2h-1.2zM685 337.8h1.2v1.2h-1.2zM720 337.8h1.2v1.2h-1.2zM790 337.8h1.2v1.2h-1.2zM825 337.8h1.2v1.2h-1.2zM860 337.8h1.2v1.2h-1.2zM894 337.8h1.2v1.2h-1.2zM964 337.8h1.2v1.2h-1.2zM999 337.8h1.2v1.2h-1.2zM1034 337.8h1.2v1.2h-1.2zM1069 337.8h1.2v1.2h-1.2zM1139 337.8h1.2v1.2h-1.2zM1174 337.8h1.2v1.2h-1.2zM1209 337.8h1.2v1.2h-1.2zM1244 337.8h1.2v1.2h-1.2zM1314 337.8h1.2v1.2h-1.2zM1349 337.8h1.2v1.2h-1.2zM1384 337.8h1.2v1.2h-1.2zM1419 337.8h1.2v1.2h-1.2zM1489 337.8h1.2v1.2h-1.2zM1524 337.8h1.2v1.2h-1.2zM1559 337.8h1.2v1.2h-1.2zM1594 337.8h1.2v1.2h-1.2zM1664 337.8h1.2v1.2h-1.2zM1699 337.8h1.2v1.2h-1.2zM1734 337.8h1.2v1.2h-1.2zM20 360.8h1.2v1.2h-1.2zM90 360.8h1.2v1.2h-1.2zM125 360.8h1.2v1.2h-1.2zM160 360.8h1.2v1.2h-1.2zM195 360.8h1.2v1.2h-1.2zM265 360.8h1.2v1.2h-1.2zM300 360.8h1.2v1.2h-1.2zM335 360.8h1.2v1.2h-1.2zM370 360.8h1.2v1.2h-1.2zM440 360.8h1.2v1.2h-1.2zM475 360.8h1.2v1.2h-1.2zM510 360.8h1.2v1.2h-1.2zM545 360.8h1.2v1.2h-1.2zM615 360.8h1.2v1.2h-1.2zM650 360.8h1.2v1.2h-1.2zM685 360.8h1.2v1.2h-1.2zM720 360.8h1.2v1.2h-1.2zM790 360.8h1.2v1.2h-1.2zM825 360.8h1.2v1.2h-1.2zM860 360.8h1.2v1.2h-1.2zM894 360.8h1.2v1.2h-1.2zM964 360.8h1.2v1.2h-1.2zM999 360.8h1.2v1.2h-1.2zM1034 360.8h1.2v1.2h-1.2zM1069 360.8h1.2v1.2h-1.2zM1139 360.8h1.2v1.2h-1.2zM1174 360.8h1.2v1.2h-1.2zM1209 360.8h1.2v1.2h-1.2zM1244 360.8h1.2v1.2h-1.2zM1314 360.8h1.2v1.2h-1.2zM1349 360.8h1.2v1.2h-1.2zM1384 360.8h1.2v1.2h-1.2zM1419 360.8h1.2v1.2h-1.2zM1489 360.8h1.2v1.2h-1.2zM1524 360.8h1.2v1.2h-1.2zM1559 360.8h1.2v1.2h-1.2zM1594 360.8h1.2v1.2h-1.2zM1664 360.8h1.2v1.2h-1.2zM1699 360.8h1.2v1.2h-1.2zM1734 360.8h1.2v1.2h-1.2zM20 372.3h1.2v1.2h-1.2zM90 372.3h1.2v1.2h-1.2zM125 372.3h1.2v1.2h-1.2zM160 372.3h1.2v1.2h-1.2zM195 372.3h1.2v1.2h-1.2zM265 372.3h1.2v1.2h-1.2zM300 372.3h1.2v1.2h-1.2zM335 372.3h1.2v1.2h-1.2zM370 372.3h1.2v1.2h-1.2zM440 372.3h1.2v1.2h-1.2zM475 372.3h1.2v1.2h-1.2zM510 372.3h1.2v1.2h-1.2zM545 372.3h1.2v1.2h-1.2zM615 372.3h1.2v1.2h-1.2zM650 372.3h1.2v1.2h-1.2zM685 372.3h1.2v1.2h-1.2zM720 372.3h1.2v1.2h-1.2zM790 372.3h1.2v1.2h-1.2zM825 372.3h1.2v1.2h-1.2zM860 372.3h1.2v1.2h-1.2zM894 372.3h1.2v1.2h-1.2zM964 372.3h1.2v1.2h-1.2zM999 372.3h1.2v1.2h-1.2zM1034 372.3h1.2v1.2h-1.2zM1069 372.3h1.2v1.2h-1.2zM1139 372.3h1.2v1.2h-1.2zM1174 372.3h1.2v1.2h-1.2zM1209 372.3h1.2v1.2h-1.2zM1244 372.3h1.2v1.2h-1.2zM1314 372.3h1.2v1.2h-1.2zM1349 372.3h1.2v1.2h-1.2zM1384 372.3h1.2v1.2h-1.2zM1419 372.3h1.2v1.2h-1.2zM1489 372.3h1.2v1.2h-1.2zM1524 372.3h1.2v1.2h-1.2zM1559 372.3h1.2v1.2h-1.2zM1594 372.3h1.2v1.2h-1.2zM1664 372.3h1.2v1.2h-1.2zM20 383.8h1.2v1.2h-1.2zM90 383.8h1.2v1.2h-1.2zM125 383.8h1.2v1.2h-1.2zM160 383.8h1.2v1.2h-1.2zM195 383.8h1.2v1.2h-1.2zM265 383.8h1.2v1.2h-1.2zM300 383.8h1.2v1.2h-1.2zM335 383.8h1.2v1.2h-1.2zM370 383.8h1.2v1.2h-1.2zM440 383.8h1.2v1.2h-1.2zM475 383.8h1.2v1.2h-1.2zM510 383.8h1.2v1.2h-1.2zM545 383.8h1.2v1.2h-1.2zM615 383.8h1.2v1.2h-1.2zM650 383.8h1.2v1.2h-1.2zM685 383.8h1.2v1.2h-1.2zM720 383.8h1.2v1.2h-1.2zM790 383.8h1.2v1.2h-1.2zM825 383.8h1.2v1.2h-1.2zM860 383.8h1.2v1.2h-1.2zM894 383.8h1.2v1.2h-1.2zM964 383.8h1.2v1.2h-1.2zM999 383.8h1.2v1.2h-1.2zM1034 383.8h1.2v1.2h-1.2zM1069 383.8h1.2v1.2h-1.2zM1139 383.8h1.2v1.2h-1.2zM1174 383.8h1.2v1.2h-1.2zM1209 383.8h1.2v1.2h-1.2zM1244 383.8h1.2v1.2h-1.2zM1314 383.8h1.2v1.2h-1.2zM1349 383.8h1.2v1.2h-1.2zM1384 383.8h1.2v1.2h-1.2zM1419 383.8h1.2v1.2h-1.2zM1489 383.8h1.2v1.2h-1.2zM1524 383.8h1.2v1.2h-1.2zM1559 383.8h1.2v1.2h-1.2zM1594 383.8h1.2v1.2h-1.2zM1664 383.8h1.2v1.2h-1.2zM1699 383.8h1.2v1.2h-1.2zM1734 383.8h1.2v1.2h-1.2zM20 395.3h1.2v1.2h-1.2zM90 395.3h1.2v1.2h-1.2zM125 395.3h1.2v1.2h-1.2zM160 395.3h1.2v1.2h-1.2zM195 395.3h1.2v1.2h-1.2zM265 395.3h1.2v1.2h-1.2zM300 395.3h1.2v1.2h-1.2zM335 395.3h1.2v1.2h-1.2zM370 395.3h1.2v1.2h-1.2zM440 395.3h1.2v1.2h-1.2zM475 395.3h1.2v1.2h-1.2zM510 395.3h1.2v1.2h-1.2zM545 395.3h1.2v1.2h-1.2zM615 395.3h1.2v1.2h-1.2zM650 395.3h1.2v1.2h-1.2zM685 395.3h1.2v1.2h-1.2zM720 395.3h1.2v1.2h-1.2zM790 395.3h1.2v1.2h-1.2zM825 395.3h1.2v1.2h-1.2zM860 395.3h1.2v1.2h-1.2zM894 395.3h1.2v1.2h-1.2zM964 395.3h1.2v1.2h-1.2zM999 395.3h1.2v1.2h-1.2zM1034 395.3h1.2v1.2h-1.2zM1069 395.3h1.2v1.2h-1.2zM1139 395.3h1.2v1.2h-1.2zM1174 395.3h1.2v1.2h-1.2zM1209 395.3h1.2v1.2h-1.2zM1244 395.3h1.2v1.2h-1.2zM1314 395.3h1.2v1.2h-1.2zM1349 395.3h1.2v1.2h-1.2zM1384 395.3h1.2v1.2h-1.2zM1419 395.3h1.2v1.2h-1.2zM1489 395.3h1.2v1.2h-1.2zM1524 395.3h1.2v1.2h-1.2zM1559 395.3h1.2v1.2h-1.2zM1594 395.3h1.2v1.2h-1.2zM1664 395.3h1.2v1.2h-1.2zM1699 395.3h1.2v1.2h-1.2zM20 408.7h1.2v1.2h-1.2zM90 408.7h1.2v1.2h-1.2zM125 408.7h1.2v1.2h-1.2zM160 408.7h1.2v1.2h-1.2zM195 408.7h1.2v1.2h-1.2zM265 408.7h1.2v1.2h-1.2zM300 408.7h1.2v1.2h-1.2zM335 408.7h1.2v1.2h-1.2zM370 408.7h1.2v1.2h-1.2zM440 408.7h1.2v1.2h-1.2zM475 408.7h1.2v1.2h-1.2zM510 408.7h1.2v1.2h-1.2zM545 408.7h1.2v1.2h-1.2zM615 408.7h1.2v1.2h-1.2zM650 408.7h1.2v1.2h-1.2zM685 408.7h1.2v1.2h-1.2zM720 408.7h1.2v1.2h-1.2zM790 408.7h1.2v1.2h-1.2zM825 408.7h1.2v1.2h-1.2zM860 408.7h1.2v1.2h-1.2zM894 408.7h1.2v1.2h-1.2zM964 408.7h1.2v1.2h-1.2zM999 408.7h1.2v1.2h-1.2zM1034 408.7h1.2v1.2h-1.2zM1069 408.7h1.2v1.2h-1.2zM1139 408.7h1.2v1.2h-1.2zM1174 408.7h1.2v1.2h-1.2zM1209 408.7h1.2v1.2h-1.2zM1244 408.7h1.2v1.2h-1.2zM1314 408.7h1.2v1.2h-1.2zM1349 408.7h1.2v1.2h-1.2zM1384 408.7h1.2v1.2h-1.2zM1419 408.7h1.2v1.2h-1.2zM1489 408.7h1.2v1.2h-1.2zM1524 408.7h1.2v1.2h-1.2zM1559 408.7h1.2v1.2h-1.2zM1594 408.7h1.2v1.2h-1.2zM1664 408.7h1.2v1.2h-1.2zM1699 408.7h1.2v1.2h-1.2zM1734 408.7h1.2v1.2h-1.2zM20 420.2h1.2v1.2h-1.2zM90 420.2h1.2v1.2h-1.2zM125 420.2h1.2v1.2h-1.2zM160 420.2h1.2v1.2h-1.2zM195 420.2h1.2v1.2h-1.2zM265 420.2h1.2v1.2h-1.2zM300 420.2h1.2v1.2h-1.2zM335 420.2h1.2v1.2h-1.2zM370 420.2h1.2v1.2h-1.2zM440 420.2h1.2v1.2h-1.2zM475 420.2h1.2v1.2h-1.2zM510 420.2h1.2v1.2h-1.2zM545 420.2h1.2v1.2h-1.2zM615 420.2h1.2v1.2h-1.2zM650 420.2h1.2v1.2h-1.2zM685 420.2h1.2v1.2h-1.2zM720 420.2h1.2v1.2h-1.2zM790 420.2h1.2v1.2h-1.2zM825 420.2h1.2v1.2h-1.2zM860 420.2h1.2v1.2h-1.2zM894 420.2h1.2v1.2h-1.2zM964 420.2h1.2v1.2h-1.2zM999 420.2h1.2v1.2h-1.2zM1034 420.2h1.2v1.2h-1.2zM1069 420.2h1.2v1.2h-1.2zM1139 420.2h1.2v1.2h-1.2zM1174 420.2h1.2v1.2h-1.2zM1209 420.2h1.2v1.2h-1.2zM1244 420.2h1.2v1.2h-1.2zM1314 420.2h1.2v1.2h-1.2zM1349 420.2h1.2v1.2h-1.2zM1384 420.2h1.2v1.2h-1.2zM1419 420.2h1.2v1.2h-1.2zM1489 420.2h1.2v1.2h-1.2zM1524 420.2h1.2v1.2h-1.2zM1559 420.2h1.2v1.2h-1.2zM1594 420.2h1.2v1.2h-1.2zM1664 420.2h1.2v1.2h-1.2zM1699 420.2h1.2v1.2h-1.2zM20 431.7h1.2v1.2h-1.2zM90 431.7h1.2v1.2h-1.2zM125 431.7h1.2v1.2h-1.2zM160 431.7h1.2v1.2h-1.2zM195 431.7h1.2v1.2h-1.2zM265 431.7h1.2v1.2h-1.2zM300 431.7h1.2v1.2h-1.2zM335 431.7h1.2v1.2h-1.2zM370 431.7h1.2v1.2h-1.2zM440 431.7h1.2v1.2h-1.2zM475 431.7h1.2v1.2h-1.2zM510 431.7h1.2v1.2h-1.2zM545 431.7h1.2v1.2h-1.2zM615 431.7h1.2v1.2h-1.2zM650 431.7h1.2v1.2h-1.2zM685 431.7h1.2v1.2h-1.2zM720 431.7h1.2v1.2h-1.2zM790 431.7h1.2v1.2h-1.2zM825 431.7h1.2v1.2h-1.2zM860 431.7h1.2v1.2h-1.2zM894 431.7h1.2v1.2h-1.2zM964 431.7h1.2v1.2h-1.2zM999 431.7h1.2v1.2h-1.2zM1034 431.7h1.2v1.2h-1.2zM1069 431.7h1.2v1.2h-1.2zM1139 431.7h1.2v1.2h-1.2zM1174 431.7h1.2v1.2h-1.2zM1209 431.7h1.2v1.2h-1.2zM1244 431.7h1.2v1.2h-1.2zM1314 431.7h1.2v1.2h-1.2zM1349 431.7h1.2v1.2h-1.2zM1384 431.7h1.2v1.2h-1.2zM1419 431.7h1.2v1.2h-1.2zM1489 431.7h1.2v1.2h-1.2zM1524 431.7h1.2v1.2h-1.2zM1559 431.7h1.2v1.2h-1.2zM1594 431.7h1.2v1.2h-1.2zM1664 431.7h1.2v1.2h-1.2zM1699 431.7h1.2v1.2h-1.2zM1734 431.7h1.2v1.2h-1.2zM20 443.2h1.2v1.2h-1.2zM90 443.2h1.2v1.2h-1.2zM125 443.2h1.2v1.2h-1.2zM160 443.2h1.2v1.2h-1.2zM195 443.2h1.2v1.2h-1.2zM265 443.2h1.2v1.2h-1.2zM300 443.2h1.2v1.2h-1.2zM335 443.2h1.2v1.2h-1.2zM370 443.2h1.2v1.2h-1.2zM440 443.2h1.2v1.2h-1.2zM475 443.2h1.2v1.2h-1.2zM510 443.2h1.2v1.2h-1.2zM545 443.2h1.2v1.2h-1.2zM615 443.2h1.2v1.2h-1.2zM650 443.2h1.2v1.2h-1.2zM685 443.2h1.2v1.2h-1.2zM720 443.2h1.2v1.2h-1.2zM790 443.2h1.2v1.2h-1.2zM825 443.2h1.2v1.2h-1.2zM860 443.2h1.2v1.2h-1.2zM894 443.2h1.2v1.2h-1.2zM964 443.2h1.2v1.2h-1.2zM999 443.2h1.2v1.2h-1.2zM1034 443.2h1.2v1.2h-1.2zM1069 443.2h1.2v1.2h-1.2zM1139 443.2h1.2v1.2h-1.2zM1174 443.2h1.2v1.2h-1.2zM1209 443.2h1.2v1.2h-1.2zM1244 443.2h1.2v1.2h-1.2zM1314 443.2h1.2v1.2h-1.2zM1349 443.2h1.2v1.2h-1.2zM1384 443.2h1.2v1.2h-1.2zM1419 443.2h1.2v1.2h-1.2zM1489 443.2h1.2v1.2h-1.2zM1524 443.2h1.2v1.2h-1.2zM1559 443.2h1.2v1.2h-1.2zM1594 443.2h1.2v1.2h-1.2zM1664 443.2h1.2v1.2h-1.2zM20 454.7h1.2v1.2h-1.2zM90 454.7h1.2v1.2h-1.2zM125 454.7h1.2v1.2h-1.2zM160 454.7h1.2v1.2h-1.2zM195 454.7h1.2v1.2h-1.2zM265 454.7h1.2v1.2h-1.2zM300 454.7h1.2v1.2h-1.2zM335 454.7h1.2v1.2h-1.2zM370 454.7h1.2v1.2h-1.2zM440 454.7h1.2v1.2h-1.2zM475 454.7h1.2v1.2h-1.2zM510 454.7h1.2v1.2h-1.2zM545 454.7h1.2v1.2h-1.2zM615 454.7h1.2v1.2h-1.2zM650 454.7h1.2v1.2h-1.2zM685 454.7h1.2v1.2h-1.2zM720 454.7h1.2v1.2h-1.2zM790 454.7h1.2v1.2h-1.2zM825 454.7h1.2v1.2h-1.2zM860 454.7h1.2v1.2h-1.2zM894 454.7h1.2v1.2h-1.2zM964 454.7h1.2v1.2h-1.2zM999 454.7h1.2v1.2h-1.2zM1034 454.7h1.2v1.2h-1.2zM1069 454.7h1.2v1.2h-1.2zM1139 454.7h1.2v1.2h-1.2zM1174 454.7h1.2v1.2h-1.2zM1209 454.7h1.2v1.2h-1.2zM1244 454.7h1.2v1.2h-1.2zM1314 454.7h1.2v1.2h-1.2zM1349 454.7h1.2v1.2h-1.2zM1384 454.7h1.2v1.2h-1.2zM1419 454.7h1.2v1.2h-1.2zM1489 454.7h1.2v1.2h-1.2zM1524 454.7h1.2v1.2h-1.2zM1559 454.7h1.2v1.2h-1.2zM1594 454.7h1.2v1.2h-1.2zM1664 454.7h1.2v1.2h-1.2zM1699 454.7h1.2v1.2h-1.2zM1734 454.7h1.2v1.2h-1.2zM20 466.2h1.2v1.2h-1.2zM90 466.2h1.2v1.2h-1.2zM125 466.2h1.2v1.2h-1.2zM160 466.2h1.2v1.2h-1.2zM195 466.2h1.2v1.2h-1.2zM265 466.2h1.2v1.2h-1.2zM300 466.2h1.2v1.2h-1.2zM335 466.2h1.2v1.2h-1.2zM370 466.2h1.2v1.2h-1.2zM440 466.2h1.2v1.2h-1.2zM475 466.2h1.2v1.2h-1.2zM510 466.2h1.2v1.2h-1.2zM545 466.2h1.2v1.2h-1.2zM615 466.2h1.2v1.2h-1.2zM650 466.2h1.2v1.2h-1.2zM685 466.2h1.2v1.2h-1.2zM720 466.2h1.2v1.2h-1.2zM790 466.2h1.2v1.2h-1.2zM825 466.2h1.2v1.2h-1.2zM860 466.2h1.2v1.2h-1.2zM894 466.2h1.2v1.2h-1.2zM964 466.2h1.2v1.2h-1.2zM999 466.2h1.2v1.2h-1.2zM1034 466.2h1.2v1.2h-1.2zM1069 466.2h1.2v1.2h-1.2zM1139 466.2h1.2v1.2h-1.2zM1174 466.2h1.2v1.2h-1.2zM1209 466.2h1.2v1.2h-1.2zM1244 466.2h1.2v1.2h-1.2zM1314 466.2h1.2v1.2h-1.2zM1349 466.2h1.2v1.2h-1.2zM1384 466.2h1.2v1.2h-1.2zM1419 466.2h1.2v1.2h-1.2zM1489 466.2h1.2v1.2h-1.2zM1524 466.2h1.2v1.2h-1.2zM1559 466.2h1.2v1.2h-1.2zM1594 466.2h1.2v1.2h-1.2zM1664 466.2h1.2v1.2h-1.2zM20 489.2h1.2v1.2h-1.2zM90 489.2h1.2v1.2h-1.2zM125 489.2h1.2v1.2h-1.2zM160 489.2h1.2v1.2h-1.2zM195 489.2h1.2v1.2h-1.2zM265 489.2h1.2v1.2h-1.2zM300 489.2h1.2v1.2h-1.2zM335 489.2h1.2v1.2h-1.2zM370 489.2h1.2v1.2h-1.2zM440 489.2h1.2v1.2h-1.2zM475 489.2h1.2v1.2h-1.2zM510 489.2h1.2v1.2h-1.2zM545 489.2h1.2v1.2h-1.2zM615 489.2h1.2v1.2h-1.2zM650 489.2h1.2v1.2h-1.2zM685 489.2h1.2v1.2h-1.2zM720 489.2h1.2v1.2h-1.2zM790 489.2h1.2v1.2h-1.2zM825 489.2h1.2v1.2h-1.2zM860 489.2h1.2v1.2h-1.2zM894 489.2h1.2v1.2h-1.2zM964 489.2h1.2v1.2h-1.2zM999 489.2h1.2v1.2h-1.2zM1034 489.2h1.2v1.2h-1.2zM1069 489.2h1.2v1.2h-1.2zM1139 489.2h1.2v1.2h-1.2zM1174 489.2h1.2v1.2h-1.2zM1209 489.2h1.2v1.2h-1.2zM1244 489.2h1.2v1.2h-1.2zM1314 489.2h1.2v1.2h-1.2zM1349 489.2h1.2v1.2h-1.2zM1384 489.2h1.2v1.2h-1.2zM1419 489.2h1.2v1.2h-1.2zM1489 489.2h1.2v1.2h-1.2zM1524 489.2h1.2v1.2h-1.2zM1559 489.2h1.2v1.2h-1.2zM1594 489.2h1.2v1.2h-1.2zM1664 489.2h1.2v1.2h-1.2zM20 500.7h1.2v1.2h-1.2zM90 500.7h1.2v1.2h-1.2zM125 500.7h1.2v1.2h-1.2zM160 500.7h1.2v1.2h-1.2zM195 500.7h1.2v1.2h-1.2zM265 500.7h1.2v1.2h-1.2zM300 500.7h1.2v1.2h-1.2zM335 500.7h1.2v1.2h-1.2zM370 500.7h1.2v1.2h-1.2zM440 500.7h1.2v1.2h-1.2zM475 500.7h1.2v1.2h-1.2zM510 500.7h1.2v1.2h-1.2zM545 500.7h1.2v1.2h-1.2zM615 500.7h1.2v1.2h-1.2zM650 500.7h1.2v1.2h-1.2zM685 500.7h1.2v1.2h-1.2zM720 500.7h1.2v1.2h-1.2zM790 500.7h1.2v1.2h-1.2zM825 500.7h1.2v1.2h-1.2zM860 500.7h1.2v1.2h-1.2zM894 500.7h1.2v1.2h-1.2zM964 500.7h1.2v1.2h-1.2zM999 500.7h1.2v1.2h-1.2zM1034 500.7h1.2v1.2h-1.2zM1069 500.7h1.2v1.2h-1.2zM1139 500.7h1.2v1.2h-1.2zM1174 500.7h1.2v1.2h-1.2zM1209 500.7h1.2v1.2h-1.2zM1244 500.7h1.2v1.2h-1.2zM1314 500.7h1.2v1.2h-1.2zM1349 500.7h1.2v1.2h-1.2zM1384 500.7h1.2v1.2h-1.2zM1419 500.7h1.2v1.2h-1.2zM1489 500.7h1.2v1.2h-1.2zM1524 500.7h1.2v1.2h-1.2zM1559 500.7h1.2v1.2h-1.2zM1594 500.7h1.2v1.2h-1.2zM1664 500.7h1.2v1.2h-1.2zM1699 500.7h1.2v1.2h-1.2zM1734 500.7h1.2v1.2h-1.2zM20 512.2h1.2v1.2h-1.2zM90 512.2h1.2v1.2h-1.2zM125 512.2h1.2v1.2h-1.2zM160 512.2h1.2v1.2h-1.2zM195 512.2h1.2v1.2h-1.2zM265 512.2h1.2v1.2h-1.2zM300 512.2h1.2v1.2h-1.2zM335 512.2h1.2v1.2h-1.2zM370 512.2h1.2v1.2h-1.2zM440 512.2h1.2v1.2h-1.2zM475 512.2h1.2v1.2h-1.2zM510 512.2h1.2v1.2h-1.2zM545 512.2h1.2v1.2h-1.2zM615 512.2h1.2v1.2h-1.2zM650 512.2h1.2v1.2h-1.2zM685 512.2h1.2v1.2h-1.2zM720 512.2h1.2v1.2h-1.2zM790 512.2h1.2v1.2h-1.2zM825 512.2h1.2v1.2h-1.2zM860 512.2h1.2v1.2h-1.2zM894 512.2h1.2v1.2h-1.2zM964 512.2h1.2v1.2h-1.2zM999 512.2h1.2v1.2h-1.2zM1034 512.2h1.2v1.2h-1.2zM1069 512.2h1.2v1.2h-1.2zM1139 512.2h1.2v1.2h-1.2zM1174 512.2h1.2v1.2h-1.2zM1209 512.2h1.2v1.2h-1.2zM1244 512.2h1.2v1.2h-1.2zM1314 512.2h1.2v1.2h-1.2zM1349 512.2h1.2v1.2h-1.2zM1384 512.2h1.2v1.2h-1.2zM1419 512.2h1.2v1.2h-1.2zM1489 512.2h1.2v1.2h-1.2zM1524 512.2h1.2v1.2h-1.2zM1559 512.2h1.2v1.2h-1.2zM1594 512.2h1.2v1.2h-1.2zM1664 512.2h1.2v1.2h-1.2zM20 525.9h1.2v1.2h-1.2zM90 525.9h1.2v1.2h-1.2zM125 525.9h1.2v1.2h-1.2zM160 525.9h1.2v1.2h-1.2zM195 525.9h1.2v1.2h-1.2zM265 525.9h1.2v1.2h-1.2zM300 525.9h1.2v1.2h-1.2zM335 525.9h1.2v1.2h-1.2zM370 525.9h1.2v1.2h-1.2zM440 525.9h1.2v1.2h-1.2zM475 525.9h1.2v1.2h-1.2zM510 525.9h1.2v1.2h-1.2zM545 525.9h1.2v1.2h-1.2zM615 525.9h1.2v1.2h-1.2zM650 525.9h1.2v1.2h-1.2zM685 525.9h1.2v1.2h-1.2zM720 525.9h1.2v1.2h-1.2zM790 525.9h1.2v1.2h-1.2zM825 525.9h1.2v1.2h-1.2zM860 525.9h1.2v1.2h-1.2zM894 525.9h1.2v1.2h-1.2zM964 525.9h1.2v1.2h-1.2zM999 525.9h1.2v1.2h-1.2zM1034 525.9h1.2v1.2h-1.2zM1069 525.9h1.2v1.2h-1.2zM1139 525.9h1.2v1.2h-1.2zM1174 525.9h1.2v1.2h-1.2zM1209 525.9h1.2v1.2h-1.2zM1244 525.9h1.2v1.2h-1.2zM1314 525.9h1.2v1.2h-1.2zM1349 525.9h1.2v1.2h-1.2zM1384 525.9h1.2v1.2h-1.2zM1419 525.9h1.2v1.2h-1.2zM1489 525.9h1.2v1.2h-1.2zM1524 525.9h1.2v1.2h-1.2zM1559 525.9h1.2v1.2h-1.2zM1594 525.9h1.2v1.2h-1.2zM1664 525.9h1.2v1.2h-1.2zM1699 525.9h1.2v1.2h-1.2zM1734 525.9h1.2v1.2h-1.2zM20 537.4h1.2v1.2h-1.2zM90 537.4h1.2v1.2h-1.2zM125 537.4h1.2v1.2h-1.2zM160 537.4h1.2v1.2h-1.2zM195 537.4h1.2v1.2h-1.2zM265 537.4h1.2v1.2h-1.2zM300 537.4h1.2v1.2h-1.2zM335 537.4h1.2v1.2h-1.2zM370 537.4h1.2v1.2h-1.2zM440 537.4h1.2v1.2h-1.2zM475 537.4h1.2v1.2h-1.2zM510 537.4h1.2v1.2h-1.2zM545 537.4h1.2v1.2h-1.2zM615 537.4h1.2v1.2h-1.2zM650 537.4h1.2v1.2h-1.2zM685 537.4h1.2v1.2h-1.2zM720 537.4h1.2v1.2h-1.2zM790 537.4h1.2v1.2h-1.2zM825 537.4h1.2v1.2h-1.2zM860 537.4h1.2v1.2h-1.2zM894 537.4h1.2v1.2h-1.2zM964 537.4h1.2v1.2h-1.2zM999 537.4h1.2v1.2h-1.2zM1034 537.4h1.2v1.2h-1.2zM1069 537.4h1.2v1.2h-1.2zM1139 537.4h1.2v1.2h-1.2zM1174 537.4h1.2v1.2h-1.2zM1209 537.4h1.2v1.2h-1.2zM1244 537.4h1.2v1.2h-1.2zM1314 537.4h1.2v1.2h-1.2zM1349 537.4h1.2v1.2h-1.2zM1384 537.4h1.2v1.2h-1.2zM1419 537.4h1.2v1.2h-1.2zM1489 537.4h1.2v1.2h-1.2zM1524 537.4h1.2v1.2h-1.2zM1559 537.4h1.2v1.2h-1.2zM1594 537.4h1.2v1.2h-1.2zM1664 537.4h1.2v1.2h-1.2zM1699 537.4h1.2v1.2h-1.2zM20 548.9h1.2v1.2h-1.2zM90 548.9h1.2v1.2h-1.2zM125 548.9h1.2v1.2h-1.2zM160 548.9h1.2v1.2h-1.2zM195 548.9h1.2v1.2h-1.2zM265 548.9h1.2v1.2h-1.2zM300 548.9h1.2v1.2h-1.2zM335 548.9h1.2v1.2h-1.2zM370 548.9h1.2v1.2h-1.2zM440 548.9h1.2v1.2h-1.2zM475 548.9h1.2v1.2h-1.2zM510 548.9h1.2v1.2h-1.2zM545 548.9h1.2v1.2h-1.2zM615 548.9h1.2v1.2h-1.2zM650 548.9h1.2v1.2h-1.2zM685 548.9h1.2v1.2h-1.2zM720 548.9h1.2v1.2h-1.2zM790 548.9h1.2v1.2h-1.2zM825 548.9h1.2v1.2h-1.2zM860 548.9h1.2v1.2h-1.2zM894 548.9h1.2v1.2h-1.2zM964 548.9h1.2v1.2h-1.2zM999 548.9h1.2v1.2h-1.2zM1034 548.9h1.2v1.2h-1.2zM1069 548.9h1.2v1.2h-1.2zM1139 548.9h1.2v1.2h-1.2zM1174 548.9h1.2v1.2h-1.2zM1209 548.9h1.2v1.2h-1.2zM1244 548.9h1.2v1.2h-1.2zM1314 548.9h1.2v1.2h-1.2zM1349 548.9h1.2v1.2h-1.2zM1384 548.9h1.2v1.2h-1.2zM1419 548.9h1.2v1.2h-1.2zM1489 548.9h1.2v1.2h-1.2zM1524 548.9h1.2v1.2h-1.2zM1559 548.9h1.2v1.2h-1.2zM1594 548.9h1.2v1.2h-1.2zM1664 548.9h1.2v1.2h-1.2zM1699 548.9h1.2v1.2h-1.2zM1734 548.9h1.2v1.2h-1.2zM20 560.4h1.2v1.2h-1.2zM90 560.4h1.2v1.2h-1.2zM125 560.4h1.2v1.2h-1.2zM160 560.4h1.2v1.2h-1.2zM195 560.4h1.2v1.2h-1.2zM265 560.4h1.2v1.2h-1.2zM300 560.4h1.2v1.2h-1.2zM335 560.4h1.2v1.2h-1.2zM370 560.4h1.2v1.2h-1.2zM440 560.4h1.2v1.2h-1.2zM475 560.4h1.2v1.2h-1.2zM510 560.4h1.2v1.2h-1.2zM545 560.4h1.2v1.2h-1.2zM615 560.4h1.2v1.2h-1.2zM650 560.4h1.2v1.2h-1.2zM685 560.4h1.2v1.2h-1.2zM720 560.4h1.2v1.2h-1.2zM790 560.4h1.2v1.2h-1.2zM825 560.4h1.2v1.2h-1.2zM860 560.4h1.2v1.2h-1.2zM894 560.4h1.2v1.2h-1.2zM964 560.4h1.2v1.2h-1.2zM999 560.4h1.2v1.2h-1.2zM1034 560.4h1.2v1.2h-1.2zM1069 560.4h1.2v1.2h-1.2zM1139 560.4h1.2v1.2h-1.2zM1174 560.4h1.2v1.2h-1.2zM1209 560.4h1.2v1.2h-1.2zM1244 560.4h1.2v1.2h-1.2zM1314 560.4h1.2v1.2h-1.2zM1349 560.4h1.2v1.2h-1.2zM1384 560.4h1.2v1.2h-1.2zM1419 560.4h1.2v1.2h-1.2zM1489 560.4h1.2v1.2h-1.2zM1524 560.4h1.2v1.2h-1.2zM1559 560.4h1.2v1.2h-1.2zM1594 560.4h1.2v1.2h-1.2zM1664 560.4h1.2v1.2h-1.2zM1699 560.4h1.2v1.2h-1.2zM20 571.9h1.2v1.2h-1.2zM90 571.9h1.2v1.2h-1.2zM125 571.9h1.2v1.2h-1.2zM160 571.9h1.2v1.2h-1.2zM195 571.9h1.2v1.2h-1.2zM265 571.9h1.2v1.2h-1.2zM300 571.9h1.2v1.2h-1.2zM335 571.9h1.2v1.2h-1.2zM370 571.9h1.2v1.2h-1.2zM440 571.9h1.2v1.2h-1.2zM475 571.9h1.2v1.2h-1.2zM510 571.9h1.2v1.2h-1.2zM545 571.9h1.2v1.2h-1.2zM615 571.9h1.2v1.2h-1.2zM650 571.9h1.2v1.2h-1.2zM685 571.9h1.2v1.2h-1.2zM720 571.9h1.2v1.2h-1.2zM790 571.9h1.2v1.2h-1.2zM825 571.9h1.2v1.2h-1.2zM860 571.9h1.2v1.2h-1.2zM894 571.9h1.2v1.2h-1.2zM964 571.9h1.2v1.2h-1.2zM999 571.9h1.2v1.2h-1.2zM1034 571.9h1.2v1.2h-1.2zM1069 571.9h1.2v1.2h-1.2zM1139 571.9h1.2v1.2h-1.2zM1174 571.9h1.2v1.2h-1.2zM1209 571.9h1.2v1.2h-1.2zM1244 571.9h1.2v1.2h-1.2zM1314 571.9h1.2v1.2h-1.2zM1349 571.9h1.2v1.2h-1.2zM1384 571.9h1.2v1.2h-1.2zM1419 571.9h1.2v1.2h-1.2zM1489 571.9h1.2v1.2h-1.2zM1524 571.9h1.2v1.2h-1.2zM1559 571.9h1.2v1.2h-1.2zM1594 571.9h1.2v1.2h-1.2zM1664 571.9h1.2v1.2h-1.2zM1699 571.9h1.2v1.2h-1.2zM1734 571.9h1.2v1.2h-1.2zM20 594.9h1.2v1.2h-1.2zM90 594.9h1.2v1.2h-1.2zM125 594.9h1.2v1.2h-1.2zM160 594.9h1.2v1.2h-1.2zM195 594.9h1.2v1.2h-1.2zM265 594.9h1.2v1.2h-1.2zM300 594.9h1.2v1.2h-1.2zM335 594.9h1.2v1.2h-1.2zM370 594.9h1.2v1.2h-1.2zM440 594.9h1.2v1.2h-1.2zM475 594.9h1.2v1.2h-1.2zM510 594.9h1.2v1.2h-1.2zM545 594.9h1.2v1.2h-1.2zM615 594.9h1.2v1.2h-1.2zM650 594.9h1.2v1.2h-1.2zM685 594.9h1.2v1.2h-1.2zM720 594.9h1.2v1.2h-1.2zM790 594.9h1.2v1.2h-1.2zM825 594.9h1.2v1.2h-1.2zM860 594.9h1.2v1.2h-1.2zM894 594.9h1.2v1.2h-1.2zM964 594.9h1.2v1.2h-1.2zM999 594.9h1.2v1.2h-1.2zM1034 594.9h1.2v1.2h-1.2zM1069 594.9h1.2v1.2h-1.2zM1139 594.9h1.2v1.2h-1.2zM1174 594.9h1.2v1.2h-1.2zM1209 594.9h1.2v1.2h-1.2zM1244 594.9h1.2v1.2h-1.2zM1314 594.9h1.2v1.2h-1.2zM1349 594.9h1.2v1.2h-1.2zM1384 594.9h1.2v1.2h-1.2zM1419 594.9h1.2v1.2h-1.2zM1489 594.9h1.2v1.2h-1.2zM1524 594.9h1.2v1.2h-1.2zM1559 594.9h1.2v1.2h-1.2zM1594 594.9h1.2v1.2h-1.2zM1664 594.9h1.2v1.2h-1.2zM1699 594.9h1.2v1.2h-1.2zM1734 594.9h1.2v1.2h-1.2zM20 606.4h1.2v1.2h-1.2zM90 606.4h1.2v1.2h-1.2zM125 606.4h1.2v1.2h-1.2zM160 606.4h1.2v1.2h-1.2zM195 606.4h1.2v1.2h-1.2zM265 606.4h1.2v1.2h-1.2zM300 606.4h1.2v1.2h-1.2zM335 606.4h1.2v1.2h-1.2zM370 606.4h1.2v1.2h-1.2zM440 606.4h1.2v1.2h-1.2zM475 606.4h1.2v1.2h-1.2zM510 606.4h1.2v1.2h-1.2zM545 606.4h1.2v1.2h-1.2zM615 606.4h1.2v1.2h-1.2zM650 606.4h1.2v1.2h-1.2zM685 606.4h1.2v1.2h-1.2zM720 606.4h1.2v1.2h-1.2zM790 606.4h1.2v1.2h-1.2zM825 606.4h1.2v1.2h-1.2zM860 606.4h1.2v1.2h-1.2zM894 606.4h1.2v1.2h-1.2zM964 606.4h1.2v1.2h-1.2zM999 606.4h1.2v1.2h-1.2zM1034 606.4h1.2v1.2h-1.2zM1069 606.4h1.2v1.2h-1.2zM1139 606.4h1.2v1.2h-1.2zM1174 606.4h1.2v1.2h-1.2zM1209 606.4h1.2v1.2h-1.2zM1244 606.4h1.2v1.2h-1.2zM1314 606.4h1.2v1.2h-1.2zM1349 606.4h1.2v1.2h-1.2zM1384 606.4h1.2v1.2h-1.2zM1419 606.4h1.2v1.2h-1.2zM1489 606.4h1.2v1.2h-1.2zM1524 606.4h1.2v1.2h-1.2zM1559 606.4h1.2v1.2h-1.2zM1594 606.4h1.2v1.2h-1.2zM1664 606.4h1.2v1.2h-1.2zM1699 606.4h1.2v1.2h-1.2zM20 617.9h1.2v1.2h-1.2zM90 617.9h1.2v1.2h-1.2zM125 617.9h1.2v1.2h-1.2zM160 617.9h1.2v1.2h-1.2zM195 617.9h1.2v1.2h-1.2zM265 617.9h1.2v1.2h-1.2zM300 617.9h1.2v1.2h-1.2zM335 617.9h1.2v1.2h-1.2zM370 617.9h1.2v1.2h-1.2zM440 617.9h1.2v1.2h-1.2zM475 617.9h1.2v1.2h-1.2zM510 617.9h1.2v1.2h-1.2zM545 617.9h1.2v1.2h-1.2zM615 617.9h1.2v1.2h-1.2zM650 617.9h1.2v1.2h-1.2zM685 617.9h1.2v1.2h-1.2zM720 617.9h1.2v1.2h-1.2zM790 617.9h1.2v1.2h-1.2zM825 617.9h1.2v1.2h-1.2zM860 617.9h1.2v1.2h-1.2zM894 617.9h1.2v1.2h-1.2zM964 617.9h1.2v1.2h-1.2zM999 617.9h1.2v1.2h-1.2zM1034 617.9h1.2v1.2h-1.2zM1069 617.9h1.2v1.2h-1.2zM1139 617.9h1.2v1.2h-1.2zM1174 617.9h1.2v1.2h-1.2zM1209 617.9h1.2v1.2h-1.2zM1244 617.9h1.2v1.2h-1.2zM1314 617.9h1.2v1.2h-1.2zM1349 617.9h1.2v1.2h-1.2zM1384 617.9h1.2v1.2h-1.2zM1419 617.9h1.2v1.2h-1.2zM1489 617.9h1.2v1.2h-1.2zM1524 617.9h1.2v1.2h-1.2zM1559 617.9h1.2v1.2h-1.2zM1594 617.9h1.2v1.2h-1.2zM1664 617.9h1.2v1.2h-1.2zM1699 617.9h1.2v1.2h-1.2zM1734 617.9h1.2v1.2h-1.2zM20 629.4h1.2v1.2h-1.2zM90 629.4h1.2v1.2h-1.2zM125 629.4h1.2v1.2h-1.2zM160 629.4h1.2v1.2h-1.2zM195 629.4h1.2v1.2h-1.2zM265 629.4h1.2v1.2h-1.2zM300 629.4h1.2v1.2h-1.2zM335 629.4h1.2v1.2h-1.2zM370 629.4h1.2v1.2h-1.2zM440 629.4h1.2v1.2h-1.2zM475 629.4h1.2v1.2h-1.2zM510 629.4h1.2v1.2h-1.2zM545 629.4h1.2v1.2h-1.2zM615 629.4h1.2v1.2h-1.2zM650 629.4h1.2v1.2h-1.2zM685 629.4h1.2v1.2h-1.2zM720 629.4h1.2v1.2h-1.2zM790 629.4h1.2v1.2h-1.2zM825 629.4h1.2v1.2h-1.2zM860 629.4h1.2v1.2h-1.2zM894 629.4h1.2v1.2h-1.2zM964 629.4h1.2v1.2h-1.2zM999 629.4h1.2v1.2h-1.2zM1034 629.4h1.2v1.2h-1.2zM1069 629.4h1.2v1.2h-1.2zM1139 629.4h1.2v1.2h-1.2zM1174 629.4h1.2v1.2h-1.2zM1209 629.4h1.2v1.2h-1.2zM1244 629.4h1.2v1.2h-1.2zM1314 629.4h1.2v1.2h-1.2zM1349 629.4h1.2v1.2h-1.2zM1384 629.4h1.2v1.2h-1.2zM1419 629.4h1.2v1.2h-1.2zM1489 629.4h1.2v1.2h-1.2zM1524 629.4h1.2v1.2h-1.2zM1559 629.4h1.2v1.2h-1.2zM1594 629.4h1.2v1.2h-1.2zM1664 629.4h1.2v1.2h-1.2zM1699 629.4h1.2v1.2h-1.2zM20 642.4h1.2v1.2h-1.2zM90 642.4h1.2v1.2h-1.2zM125 642.4h1.2v1.2h-1.2zM160 642.4h1.2v1.2h-1.2zM195 642.4h1.2v1.2h-1.2zM265 642.4h1.2v1.2h-1.2zM300 642.4h1.2v1.2h-1.2zM335 642.4h1.2v1.2h-1.2zM370 642.4h1.2v1.2h-1.2zM440 642.4h1.2v1.2h-1.2zM475 642.4h1.2v1.2h-1.2zM510 642.4h1.2v1.2h-1.2zM545 642.4h1.2v1.2h-1.2zM615 642.4h1.2v1.2h-1.2zM650 642.4h1.2v1.2h-1.2zM685 642.4h1.2v1.2h-1.2zM720 642.4h1.2v1.2h-1.2zM790 642.4h1.2v1.2h-1.2zM825 642.4h1.2v1.2h-1.2zM860 642.4h1.2v1.2h-1.2zM894 642.4h1.2v1.2h-1.2zM964 642.4h1.2v1.2h-1.2zM999 642.4h1.2v1.2h-1.2zM1034 642.4h1.2v1.2h-1.2zM1069 642.4h1.2v1.2h-1.2zM1139 642.4h1.2v1.2h-1.2zM1174 642.4h1.2v1.2h-1.2zM1209 642.4h1.2v1.2h-1.2zM1244 642.4h1.2v1.2h-1.2zM1314 642.4h1.2v1.2h-1.2zM1349 642.4h1.2v1.2h-1.2zM1384 642.4h1.2v1.2h-1.2zM1419 642.4h1.2v1.2h-1.2zM1489 642.4h1.2v1.2h-1.2zM1524 642.4h1.2v1.2h-1.2zM1559 642.4h1.2v1.2h-1.2zM1594 642.4h1.2v1.2h-1.2zM1664 642.4h1.2v1.2h-1.2zM1699 642.4h1.2v1.2h-1.2zM1734 642.4h1.2v1.2h-1.2zM20 653.9h1.2v1.2h-1.2zM90 653.9h1.2v1.2h-1.2zM125 653.9h1.2v1.2h-1.2zM160 653.9h1.2v1.2h-1.2zM195 653.9h1.2v1.2h-1.2zM265 653.9h1.2v1.2h-1.2zM300 653.9h1.2v1.2h-1.2zM335 653.9h1.2v1.2h-1.2zM370 653.9h1.2v1.2h-1.2zM440 653.9h1.2v1.2h-1.2zM475 653.9h1.2v1.2h-1.2zM510 653.9h1.2v1.2h-1.2zM545 653.9h1.2v1.2h-1.2zM615 653.9h1.2v1.2h-1.2zM650 653.9h1.2v1.2h-1.2zM685 653.9h1.2v1.2h-1.2zM720 653.9h1.2v1.2h-1.2zM790 653.9h1.2v1.2h-1.2zM825 653.9h1.2v1.2h-1.2zM860 653.9h1.2v1.2h-1.2zM894 653.9h1.2v1.2h-1.2zM964 653.9h1.2v1.2h-1.2zM999 653.9h1.2v1.2h-1.2zM1034 653.9h1.2v1.2h-1.2zM1069 653.9h1.2v1.2h-1.2zM1139 653.9h1.2v1.2h-1.2zM1174 653.9h1.2v1.2h-1.2zM1209 653.9h1.2v1.2h-1.2zM1244 653.9h1.2v1.2h-1.2zM1314 653.9h1.2v1.2h-1.2zM1349 653.9h1.2v1.2h-1.2zM1384 653.9h1.2v1.2h-1.2zM1419 653.9h1.2v1.2h-1.2zM1489 653.9h1.2v1.2h-1.2zM1524 653.9h1.2v1.2h-1.2zM1559 653.9h1.2v1.2h-1.2zM1594 653.9h1.2v1.2h-1.2zM1664 653.9h1.2v1.2h-1.2zM1699 653.9h1.2v1.2h-1.2zM20 665.4h1.2v1.2h-1.2zM90 665.4h1.2v1.2h-1.2zM125 665.4h1.2v1.2h-1.2zM160 665.4h1.2v1.2h-1.2zM195 665.4h1.2v1.2h-1.2zM265 665.4h1.2v1.2h-1.2zM300 665.4h1.2v1.2h-1.2zM335 665.4h1.2v1.2h-1.2zM370 665.4h1.2v1.2h-1.2zM440 665.4h1.2v1.2h-1.2zM475 665.4h1.2v1.2h-1.2zM510 665.4h1.2v1.2h-1.2zM545 665.4h1.2v1.2h-1.2zM615 665.4h1.2v1.2h-1.2zM650 665.4h1.2v1.2h-1.2zM685 665.4h1.2v1.2h-1.2zM720 665.4h1.2v1.2h-1.2zM790 665.4h1.2v1.2h-1.2zM825 665.4h1.2v1.2h-1.2zM860 665.4h1.2v1.2h-1.2zM894 665.4h1.2v1.2h-1.2zM964 665.4h1.2v1.2h-1.2zM999 665.4h1.2v1.2h-1.2zM1034 665.4h1.2v1.2h-1.2zM1069 665.4h1.2v1.2h-1.2zM1139 665.4h1.2v1.2h-1.2zM1174 665.4h1.2v1.2h-1.2zM1209 665.4h1.2v1.2h-1.2zM1244 665.4h1.2v1.2h-1.2zM1314 665.4h1.2v1.2h-1.2zM1349 665.4h1.2v1.2h-1.2zM1384 665.4h1.2v1.2h-1.2zM1419 665.4h1.2v1.2h-1.2zM1489 665.4h1.2v1.2h-1.2zM1524 665.4h1.2v1.2h-1.2zM1559 665.4h1.2v1.2h-1.2zM1594 665.4h1.2v1.2h-1.2zM1664 665.4h1.2v1.2h-1.2zM1699 665.4h1.2v1.2h-1.2zM1734 665.4h1.2v1.2h-1.2zM20 676.9h1.2v1.2h-1.2zM90 676.9h1.2v1.2h-1.2zM125 676.9h1.2v1.2h-1.2zM160 676.9h1.2v1.2h-1.2zM195 676.9h1.2v1.2h-1.2zM265 676.9h1.2v1.2h-1.2zM300 676.9h1.2v1.2h-1.2zM335 676.9h1.2v1.2h-1.2zM370 676.9h1.2v1.2h-1.2zM440 676.9h1.2v1.2h-1.2zM475 676.9h1.2v1.2h-1.2zM510 676.9h1.2v1.2h-1.2zM545 676.9h1.2v1.2h-1.2zM615 676.9h1.2v1.2h-1.2zM650 676.9h1.2v1.2h-1.2zM685 676.9h1.2v1.2h-1.2zM720 676.9h1.2v1.2h-1.2zM790 676.9h1.2v1.2h-1.2zM825 676.9h1.2v1.2h-1.2zM860 676.9h1.2v1.2h-1.2zM894 676.9h1.2v1.2h-1.2zM964 676.9h1.2v1.2h-1.2zM999 676.9h1.2v1.2h-1.2zM1034 676.9h1.2v1.2h-1.2zM1069 676.9h1.2v1.2h-1.2zM1139 676.9h1.2v1.2h-1.2zM1174 676.9h1.2v1.2h-1.2zM1209 676.9h1.2v1.2h-1.2zM1244 676.9h1.2v1.2h-1.2zM1314 676.9h1.2v1.2h-1.2zM1349 676.9h1.2v1.2h-1.2zM1384 676.9h1.2v1.2h-1.2zM1419 676.9h1.2v1.2h-1.2zM1489 676.9h1.2v1.2h-1.2zM1524 676.9h1.2v1.2h-1.2zM1559 676.9h1.2v1.2h-1.2zM1594 676.9h1.2v1.2h-1.2zM1664 676.9h1.2v1.2h-1.2zM1699 676.9h1.2v1.2h-1.2zM20 688.4h1.2v1.2h-1.2zM90 688.4h1.2v1.2h-1.2zM125 688.4h1.2v1.2h-1.2zM160 688.4h1.2v1.2h-1.2zM195 688.4h1.2v1.2h-1.2zM265 688.4h1.2v1.2h-1.2zM300 688.4h1.2v1.2h-1.2zM335 688.4h1.2v1.2h-1.2zM370 688.4h1.2v1.2h-1.2zM440 688.4h1.2v1.2h-1.2zM475 688.4h1.2v1.2h-1.2zM510 688.4h1.2v1.2h-1.2zM545 688.4h1.2v1.2h-1.2zM615 688.4h1.2v1.2h-1.2zM650 688.4h1.2v1.2h-1.2zM685 688.4h1.2v1.2h-1.2zM720 688.4h1.2v1.2h-1.2zM790 688.4h1.2v1.2h-1.2zM825 688.4h1.2v1.2h-1.2zM860 688.4h1.2v1.2h-1.2zM894 688.4h1.2v1.2h-1.2zM964 688.4h1.2v1.2h-1.2zM999 688.4h1.2v1.2h-1.2zM1034 688.4h1.2v1.2h-1.2zM1069 688.4h1.2v1.2h-1.2zM1139 688.4h1.2v1.2h-1.2zM1174 688.4h1.2v1.2h-1.2zM1209 688.4h1.2v1.2h-1.2zM1244 688.4h1.2v1.2h-1.2zM1314 688.4h1.2v1.2h-1.2zM1349 688.4h1.2v1.2h-1.2zM1384 688.4h1.2v1.2h-1.2zM1419 688.4h1.2v1.2h-1.2zM1489 688.4h1.2v1.2h-1.2zM1524 688.4h1.2v1.2h-1.2zM1559 688.4h1.2v1.2h-1.2zM1594 688.4h1.2v1.2h-1.2zM1664 688.4h1.2v1.2h-1.2zM1699 688.4h1.2v1.2h-1.2zM1734 688.4h1.2v1.2h-1.2zM20 699.9h1.2v1.2h-1.2zM90 699.9h1.2v1.2h-1.2zM125 699.9h1.2v1.2h-1.2zM160 699.9h1.2v1.2h-1.2zM195 699.9h1.2v1.2h-1.2zM265 699.9h1.2v1.2h-1.2zM300 699.9h1.2v1.2h-1.2zM335 699.9h1.2v1.2h-1.2zM370 699.9h1.2v1.2h-1.2zM440 699.9h1.2v1.2h-1.2zM475 699.9h1.2v1.2h-1.2zM510 699.9h1.2v1.2h-1.2zM545 699.9h1.2v1.2h-1.2zM615 699.9h1.2v1.2h-1.2zM650 699.9h1.2v1.2h-1.2zM685 699.9h1.2v1.2h-1.2zM720 699.9h1.2v1.2h-1.2zM790 699.9h1.2v1.2h-1.2zM825 699.9h1.2v1.2h-1.2zM860 699.9h1.2v1.2h-1.2zM894 699.9h1.2v1.2h-1.2zM964 699.9h1.2v1.2h-1.2zM999 699.9h1.2v1.2h-1.2zM1034 699.9h1.2v1.2h-1.2zM1069 699.9h1.2v1.2h-1.2zM1139 699.9h1.2v1.2h-1.2zM1174 699.9h1.2v1.2h-1.2zM1209 699.9h1.2v1.2h-1.2zM1244 699.9h1.2v1.2h-1.2zM1314 699.9h1.2v1.2h-1.2zM1349 699.9h1.2v1.2h-1.2zM1384 699.9h1.2v1.2h-1.2zM1419 699.9h1.2v1.2h-1.2zM1489 699.9h1.2v1.2h-1.2zM1524 699.9h1.2v1.2h-1.2zM1559 699.9h1.2v1.2h-1.2zM1594 699.9h1.2v1.2h-1.2zM1664 699.9h1.2v1.2h-1.2zM1699 699.9h1.2v1.2h-1.2zM20 711.4h1.2v1.2h-1.2zM90 711.4h1.2v1.2h-1.2zM125 711.4h1.2v1.2h-1.2zM160 711.4h1.2v1.2h-1.2zM195 711.4h1.2v1.2h-1.2zM265 711.4h1.2v1.2h-1.2zM300 711.4h1.2v1.2h-1.2zM335 711.4h1.2v1.2h-1.2zM370 711.4h1.2v1.2h-1.2zM440 711.4h1.2v1.2h-1.2zM475 711.4h1.2v1.2h-1.2zM510 711.4h1.2v1.2h-1.2zM545 711.4h1.2v1.2h-1.2zM615 711.4h1.2v1.2h-1.2zM650 711.4h1.2v1.2h-1.2zM685 711.4h1.2v1.2h-1.2zM720 711.4h1.2v1.2h-1.2zM790 711.4h1.2v1.2h-1.2zM825 711.4h1.2v1.2h-1.2zM860 711.4h1.2v1.2h-1.2zM894 711.4h1.2v1.2h-1.2zM964 711.4h1.2v1.2h-1.2zM999 711.4h1.2v1.2h-1.2zM1034 711.4h1.2v1.2h-1.2zM1069 711.4h1.2v1.2h-1.2zM1139 711.4h1.2v1.2h-1.2zM1174 711.4h1.2v1.2h-1.2zM1209 711.4h1.2v1.2h-1.2zM1244 711.4h1.2v1.2h-1.2zM1314 711.4h1.2v1.2h-1.2zM1349 711.4h1.2v1.2h-1.2zM1384 711.4h1.2v1.2h-1.2zM1419 711.4h1.2v1.2h-1.2zM1489 711.4h1.2v1.2h-1.2zM1524 711.4h1.2v1.2h-1.2zM1559 711.4h1.2v1.2h-1.2zM1594 711.4h1.2v1.2h-1.2zM1664 711.4h1.2v1.2h-1.2zM1699 711.4h1.2v1.2h-1.2zM1734 711.4h1.2v1.2h-1.2zM20 722.9h1.2v1.2h-1.2zM90 722.9h1.2v1.2h-1.2zM125 722.9h1.2v1.2h-1.2zM160 722.9h1.2v1.2h-1.2zM195 722.9h1.2v1.2h-1.2zM265 722.9h1.2v1.2h-1.2zM300 722.9h1.2v1.2h-1.2zM335 722.9h1.2v1.2h-1.2zM370 722.9h1.2v1.2h-1.2zM440 722.9h1.2v1.2h-1.2zM475 722.9h1.2v1.2h-1.2zM510 722.9h1.2v1.2h-1.2zM545 722.9h1.2v1.2h-1.2zM615 722.9h1.2v1.2h-1.2zM650 722.9h1.2v1.2h-1.2zM685 722.9h1.2v1.2h-1.2zM720 722.9h1.2v1.2h-1.2zM790 722.9h1.2v1.2h-1.2zM825 722.9h1.2v1.2h-1.2zM860 722.9h1.2v1.2h-1.2zM894 722.9h1.2v1.2h-1.2zM964 722.9h1.2v1.2h-1.2zM999 722.9h1.2v1.2h-1.2zM1034 722.9h1.2v1.2h-1.2zM1069 722.9h1.2v1.2h-1.2zM1139 722.9h1.2v1.2h-1.2zM1174 722.9h1.2v1.2h-1.2zM1209 722.9h1.2v1.2h-1.2zM1244 722.9h1.2v1.2h-1.2zM1314 722.9h1.2v1.2h-1.2zM1349 722.9h1.2v1.2h-1.2zM1384 722.9h1.2v1.2h-1.2zM1419 722.9h1.2v1.2h-1.2zM1489 722.9h1.2v1.2h-1.2zM1524 722.9h1.2v1.2h-1.2zM1559 722.9h1.2v1.2h-1.2zM1594 722.9h1.2v1.2h-1.2zM1664 722.9h1.2v1.2h-1.2zM1699 722.9h1.2v1.2h-1.2zM20 734.4h1.2v1.2h-1.2zM90 734.4h1.2v1.2h-1.2zM125 734.4h1.2v1.2h-1.2zM160 734.4h1.2v1.2h-1.2zM195 734.4h1.2v1.2h-1.2zM265 734.4h1.2v1.2h-1.2zM300 734.4h1.2v1.2h-1.2zM335 734.4h1.2v1.2h-1.2zM370 734.4h1.2v1.2h-1.2zM440 734.4h1.2v1.2h-1.2zM475 734.4h1.2v1.2h-1.2zM510 734.4h1.2v1.2h-1.2zM545 734.4h1.2v1.2h-1.2zM615 734.4h1.2v1.2h-1.2zM650 734.4h1.2v1.2h-1.2zM685 734.4h1.2v1.2h-1.2zM720 734.4h1.2v1.2h-1.2zM790 734.4h1.2v1.2h-1.2zM825 734.4h1.2v1.2h-1.2zM860 734.4h1.2v1.2h-1.2zM894 734.4h1.2v1.2h-1.2zM964 734.4h1.2v1.2h-1.2zM999 734.4h1.2v1.2h-1.2zM1034 734.4h1.2v1.2h-1.2zM1069 734.4h1.2v1.2h-1.2zM1139 734.4h1.2v1.2h-1.2zM1174 734.4h1.2v1.2h-1.2zM1209 734.4h1.2v1.2h-1.2zM1244 734.4h1.2v1.2h-1.2zM1314 734.4h1.2v1.2h-1.2zM1349 734.4h1.2v1.2h-1.2zM1384 734.4h1.2v1.2h-1.2zM1419 734.4h1.2v1.2h-1.2zM1489 734.4h1.2v1.2h-1.2zM1524 734.4h1.2v1.2h-1.2zM1559 734.4h1.2v1.2h-1.2zM1594 734.4h1.2v1.2h-1.2zM1664 734.4h1.2v1.2h-1.2zM1699 734.4h1.2v1.2h-1.2zM1734 734.4h1.2v1.2h-1.2zM20 759.8h1.2v1.2h-1.2zM90 759.8h1.2v1.2h-1.2zM125 759.8h1.2v1.2h-1.2zM160 759.8h1.2v1.2h-1.2zM195 759.8h1.2v1.2h-1.2zM265 759.8h1.2v1.2h-1.2zM300 759.8h1.2v1.2h-1.2zM335 759.8h1.2v1.2h-1.2zM370 759.8h1.2v1.2h-1.2zM440 759.8h1.2v1.2h-1.2zM475 759.8h1.2v1.2h-1.2zM510 759.8h1.2v1.2h-1.2zM545 759.8h1.2v1.2h-1.2zM615 759.8h1.2v1.2h-1.2zM650 759.8h1.2v1.2h-1.2zM685 759.8h1.2v1.2h-1.2zM720 759.8h1.2v1.2h-1.2zM790 759.8h1.2v1.2h-1.2zM825 759.8h1.2v1.2h-1.2zM860 759.8h1.2v1.2h-1.2zM894 759.8h1.2v1.2h-1.2zM964 759.8h1.2v1.2h-1.2zM999 759.8h1.2v1.2h-1.2zM1034 759.8h1.2v1.2h-1.2zM1069 759.8h1.2v1.2h-1.2zM1139 759.8h1.2v1.2h-1.2zM1174 759.8h1.2v1.2h-1.2zM1209 759.8h1.2v1.2h-1.2zM1244 759.8h1.2v1.2h-1.2zM1314 759.8h1.2v1.2h-1.2zM1349 759.8h1.2v1.2h-1.2zM1384 759.8h1.2v1.2h-1.2zM1419 759.8h1.2v1.2h-1.2zM1489 759.8h1.2v1.2h-1.2zM1524 759.8h1.2v1.2h-1.2zM1559 759.8h1.2v1.2h-1.2zM1594 759.8h1.2v1.2h-1.2zM1664 759.8h1.2v1.2h-1.2zM1699 759.8h1.2v1.2h-1.2zM1734 759.8h1.2v1.2h-1.2zM20 771.3h1.2v1.2h-1.2zM90 771.3h1.2v1.2h-1.2zM125 771.3h1.2v1.2h-1.2zM160 771.3h1.2v1.2h-1.2zM195 771.3h1.2v1.2h-1.2zM265 771.3h1.2v1.2h-1.2zM300 771.3h1.2v1.2h-1.2zM335 771.3h1.2v1.2h-1.2zM370 771.3h1.2v1.2h-1.2zM440 771.3h1.2v1.2h-1.2zM475 771.3h1.2v1.2h-1.2zM510 771.3h1.2v1.2h-1.2zM545 771.3h1.2v1.2h-1.2zM615 771.3h1.2v1.2h-1.2zM650 771.3h1.2v1.2h-1.2zM685 771.3h1.2v1.2h-1.2zM720 771.3h1.2v1.2h-1.2zM790 771.3h1.2v1.2h-1.2zM825 771.3h1.2v1.2h-1.2zM860 771.3h1.2v1.2h-1.2zM894 771.3h1.2v1.2h-1.2zM964 771.3h1.2v1.2h-1.2zM999 771.3h1.2v1.2h-1.2zM1034 771.3h1.2v1.2h-1.2zM1069 771.3h1.2v1.2h-1.2zM1139 771.3h1.2v1.2h-1.2zM1174 771.3h1.2v1.2h-1.2zM1209 771.3h1.2v1.2h-1.2zM1244 771.3h1.2v1.2h-1.2zM1314 771.3h1.2v1.2h-1.2zM1349 771.3h1.2v1.2h-1.2zM1384 771.3h1.2v1.2h-1.2zM1419 771.3h1.2v1.2h-1.2zM1489 771.3h1.2v1.2h-1.2zM1524 771.3h1.2v1.2h-1.2zM1559 771.3h1.2v1.2h-1.2zM1594 771.3h1.2v1.2h-1.2zM1664 771.3h1.2v1.2h-1.2zM20 782.9h1.2v1.2h-1.2zM90 782.9h1.2v1.2h-1.2zM125 782.9h1.2v1.2h-1.2zM160 782.9h1.2v1.2h-1.2zM195 782.9h1.2v1.2h-1.2zM265 782.9h1.2v1.2h-1.2zM300 782.9h1.2v1.2h-1.2zM335 782.9h1.2v1.2h-1.2zM370 782.9h1.2v1.2h-1.2zM440 782.9h1.2v1.2h-1.2zM475 782.9h1.2v1.2h-1.2zM510 782.9h1.2v1.2h-1.2zM545 782.9h1.2v1.2h-1.2zM615 782.9h1.2v1.2h-1.2zM650 782.9h1.2v1.2h-1.2zM685 782.9h1.2v1.2h-1.2zM720 782.9h1.2v1.2h-1.2zM790 782.9h1.2v1.2h-1.2zM825 782.9h1.2v1.2h-1.2zM860 782.9h1.2v1.2h-1.2zM894 782.9h1.2v1.2h-1.2zM964 782.9h1.2v1.2h-1.2zM999 782.9h1.2v1.2h-1.2zM1034 782.9h1.2v1.2h-1.2zM1069 782.9h1.2v1.2h-1.2zM1139 782.9h1.2v1.2h-1.2zM1174 782.9h1.2v1.2h-1.2zM1209 782.9h1.2v1.2h-1.2zM1244 782.9h1.2v1.2h-1.2zM1314 782.9h1.2v1.2h-1.2zM1349 782.9h1.2v1.2h-1.2zM1384 782.9h1.2v1.2h-1.2zM1419 782.9h1.2v1.2h-1.2zM1489 782.9h1.2v1.2h-1.2zM1524 782.9h1.2v1.2h-1.2zM1559 782.9h1.2v1.2h-1.2zM1594 782.9h1.2v1.2h-1.2zM1664 782.9h1.2v1.2h-1.2zM1699 782.9h1.2v1.2h-1.2zM1734 782.9h1.2v1.2h-1.2zM20 794.4h1.2v1.2h-1.2zM90 794.4h1.2v1.2h-1.2zM125 794.4h1.2v1.2h-1.2zM160 794.4h1.2v1.2h-1.2zM195 794.4h1.2v1.2h-1.2zM265 794.4h1.2v1.2h-1.2zM300 794.4h1.2v1.2h-1.2zM335 794.4h1.2v1.2h-1.2zM370 794.4h1.2v1.2h-1.2zM440 794.4h1.2v1.2h-1.2zM475 794.4h1.2v1.2h-1.2zM510 794.4h1.2v1.2h-1.2zM545 794.4h1.2v1.2h-1.2zM615 794.4h1.2v1.2h-1.2zM650 794.4h1.2v1.2h-1.2zM685 794.4h1.2v1.2h-1.2zM720 794.4h1.2v1.2h-1.2zM790 794.4h1.2v1.2h-1.2zM825 794.4h1.2v1.2h-1.2zM860 794.4h1.2v1.2h-1.2zM894 794.4h1.2v1.2h-1.2zM964 794.4h1.2v1.2h-1.2zM999 794.4h1.2v1.2h-1.2zM1034 794.4h1.2v1.2h-1.2zM1069 794.4h1.2v1.2h-1.2zM1139 794.4h1.2v1.2h-1.2zM1174 794.4h1.2v1.2h-1.2zM1209 794.4h1.2v1.2h-1.2zM1244 794.4h1.2v1.2h-1.2zM1314 794.4h1.2v1.2h-1.2zM1349 794.4h1.2v1.2h-1.2zM1384 794.4h1.2v1.2h-1.2zM1419 794.4h1.2v1.2h-1.2zM1489 794.4h1.2v1.2h-1.2zM1524 794.4h1.2v1.2h-1.2zM1559 794.4h1.2v1.2h-1.2zM1594 794.4h1.2v1.2h-1.2zM1664 794.4h1.2v1.2h-1.2zM20 806.0h1.2v1.2h-1.2zM90 806.0h1.2v1.2h-1.2zM125 806.0h1.2v1.2h-1.2zM160 806.0h1.2v1.2h-1.2zM195 806.0h1.2v1.2h-1.2zM265 806.0h1.2v1.2h-1.2zM300 806.0h1.2v1.2h-1.2zM335 806.0h1.2v1.2h-1.2zM370 806.0h1.2v1.2h-1.2zM440 806.0h1.2v1.2h-1.2zM475 806.0h1.2v1.2h-1.2zM510 806.0h1.2v1.2h-1.2zM545 806.0h1.2v1.2h-1.2zM615 806.0h1.2v1.2h-1.2zM650 806.0h1.2v1.2h-1.2zM685 806.0h1.2v1.2h-1.2zM720 806.0h1.2v1.2h-1.2zM790 806.0h1.2v1.2h-1.2zM825 806.0h1.2v1.2h-1.2zM860 806.0h1.2v1.2h-1.2zM894 806.0h1.2v1.2h-1.2zM964 806.0h1.2v1.2h-1.2zM999 806.0h1.2v1.2h-1.2zM1034 806.0h1.2v1.2h-1.2zM1069 806.0h1.2v1.2h-1.2zM1139 806.0h1.2v1.2h-1.2zM1174 806.0h1.2v1.2h-1.2zM1209 806.0h1.2v1.2h-1.2zM1244 806.0h1.2v1.2h-1.2zM1314 806.0h1.2v1.2h-1.2zM1349 806.0h1.2v1.2h-1.2zM1384 806.0h1.2v1.2h-1.2zM1419 806.0h1.2v1.2h-1.2zM1489 806.0h1.2v1.2h-1.2zM1524 806.0h1.2v1.2h-1.2zM1559 806.0h1.2v1.2h-1.2zM1594 806.0h1.2v1.2h-1.2zM1664 806.0h1.2v1.2h-1.2zM1699 806.0h1.2v1.2h-1.2zM1734 806.0h1.2v1.2h-1.2zM20 817.5h1.2v1.2h-1.2zM90 817.5h1.2v1.2h-1.2zM125 817.5h1.2v1.2h-1.2zM160 817.5h1.2v1.2h-1.2zM195 817.5h1.2v1.2h-1.2zM265 817.5h1.2v1.2h-1.2zM300 817.5h1.2v1.2h-1.2zM335 817.5h1.2v1.2h-1.2zM370 817.5h1.2v1.2h-1.2zM440 817.5h1.2v1.2h-1.2zM475 817.5h1.2v1.2h-1.2zM510 817.5h1.2v1.2h-1.2zM545 817.5h1.2v1.2h-1.2zM615 817.5h1.2v1.2h-1.2zM650 817.5h1.2v1.2h-1.2zM685 817.5h1.2v1.2h-1.2zM720 817.5h1.2v1.2h-1.2zM790 817.5h1.2v1.2h-1.2zM825 817.5h1.2v1.2h-1.2zM860 817.5h1.2v1.2h-1.2zM894 817.5h1.2v1.2h-1.2zM964 817.5h1.2v1.2h-1.2zM999 817.5h1.2v1.2h-1.2zM1034 817.5h1.2v1.2h-1.2zM1069 817.5h1.2v1.2h-1.2zM1139 817.5h1.2v1.2h-1.2zM1174 817.5h1.2v1.2h-1.2zM1209 817.5h1.2v1.2h-1.2zM1244 817.5h1.2v1.2h-1.2zM1314 817.5h1.2v1.2h-1.2zM1349 817.5h1.2v1.2h-1.2zM1384 817.5h1.2v1.2h-1.2zM1419 817.5h1.2v1.2h-1.2zM1489 817.5h1.2v1.2h-1.2zM1524 817.5h1.2v1.2h-1.2zM1559 817.5h1.2v1.2h-1.2zM1594 817.5h1.2v1.2h-1.2zM1664 817.5h1.2v1.2h-1.2zM20 829.1h1.2v1.2h-1.2zM90 829.1h1.2v1.2h-1.2zM125 829.1h1.2v1.2h-1.2zM160 829.1h1.2v1.2h-1.2zM195 829.1h1.2v1.2h-1.2zM265 829.1h1.2v1.2h-1.2zM300 829.1h1.2v1.2h-1.2zM335 829.1h1.2v1.2h-1.2zM370 829.1h1.2v1.2h-1.2zM440 829.1h1.2v1.2h-1.2zM475 829.1h1.2v1.2h-1.2zM510 829.1h1.2v1.2h-1.2zM545 829.1h1.2v1.2h-1.2zM615 829.1h1.2v1.2h-1.2zM650 829.1h1.2v1.2h-1.2zM685 829.1h1.2v1.2h-1.2zM720 829.1h1.2v1.2h-1.2zM790 829.1h1.2v1.2h-1.2zM825 829.1h1.2v1.2h-1.2zM860 829.1h1.2v1.2h-1.2zM894 829.1h1.2v1.2h-1.2zM964 829.1h1.2v1.2h-1.2zM999 829.1h1.2v1.2h-1.2zM1034 829.1h1.2v1.2h-1.2zM1069 829.1h1.2v1.2h-1.2zM1139 829.1h1.2v1.2h-1.2zM1174 829.1h1.2v1.2h-1.2zM1209 829.1h1.2v1.2h-1.2zM1244 829.1h1.2v1.2h-1.2zM1314 829.1h1.2v1.2h-1.2zM1349 829.1h1.2v1.2h-1.2zM1384 829.1h1.2v1.2h-1.2zM1419 829.1h1.2v1.2h-1.2zM1489 829.1h1.2v1.2h-1.2zM1524 829.1h1.2v1.2h-1.2zM1559 829.1h1.2v1.2h-1.2zM1594 829.1h1.2v1.2h-1.2zM1664 829.1h1.2v1.2h-1.2zM1699 829.1h1.2v1.2h-1.2zM1734 829.1h1.2v1.2h-1.2zM20 840.6h1.2v1.2h-1.2zM90 840.6h1.2v1.2h-1.2zM125 840.6h1.2v1.2h-1.2zM160 840.6h1.2v1.2h-1.2zM195 840.6h1.2v1.2h-1.2zM265 840.6h1.2v1.2h-1.2zM300 840.6h1.2v1.2h-1.2zM335 840.6h1.2v1.2h-1.2zM370 840.6h1.2v1.2h-1.2zM440 840.6h1.2v1.2h-1.2zM475 840.6h1.2v1.2h-1.2zM510 840.6h1.2v1.2h-1.2zM545 840.6h1.2v1.2h-1.2zM615 840.6h1.2v1.2h-1.2zM650 840.6h1.2v1.2h-1.2zM685 840.6h1.2v1.2h-1.2zM720 840.6h1.2v1.2h-1.2zM790 840.6h1.2v1.2h-1.2zM825 840.6h1.2v1.2h-1.2zM860 840.6h1.2v1.2h-1.2zM894 840.6h1.2v1.2h-1.2zM964 840.6h1.2v1.2h-1.2zM999 840.6h1.2v1.2h-1.2zM1034 840.6h1.2v1.2h-1.2zM1069 840.6h1.2v1.2h-1.2zM1139 840.6h1.2v1.2h-1.2zM1174 840.6h1.2v1.2h-1.2zM1209 840.6h1.2v1.2h-1.2zM1244 840.6h1.2v1.2h-1.2zM1314 840.6h1.2v1.2h-1.2zM1349 840.6h1.2v1.2h-1.2zM1384 840.6h1.2v1.2h-1.2zM1419 840.6h1.2v1.2h-1.2zM1489 840.6h1.2v1.2h-1.2zM1524 840.6h1.2v1.2h-1.2zM1559 840.6h1.2v1.2h-1.2zM1594 840.6h1.2v1.2h-1.2zM1664 840.6h1.2v1.2h-1.2zM20 852.2h1.2v1.2h-1.2zM90 852.2h1.2v1.2h-1.2zM125 852.2h1.2v1.2h-1.2zM160 852.2h1.2v1.2h-1.2zM195 852.2h1.2v1.2h-1.2zM265 852.2h1.2v1.2h-1.2zM300 852.2h1.2v1.2h-1.2zM335 852.2h1.2v1.2h-1.2zM370 852.2h1.2v1.2h-1.2zM440 852.2h1.2v1.2h-1.2zM475 852.2h1.2v1.2h-1.2zM510 852.2h1.2v1.2h-1.2zM545 852.2h1.2v1.2h-1.2zM615 852.2h1.2v1.2h-1.2zM650 852.2h1.2v1.2h-1.2zM685 852.2h1.2v1.2h-1.2zM720 852.2h1.2v1.2h-1.2zM790 852.2h1.2v1.2h-1.2zM825 852.2h1.2v1.2h-1.2zM860 852.2h1.2v1.2h-1.2zM894 852.2h1.2v1.2h-1.2zM964 852.2h1.2v1.2h-1.2zM999 852.2h1.2v1.2h-1.2zM1034 852.2h1.2v1.2h-1.2zM1069 852.2h1.2v1.2h-1.2zM1139 852.2h1.2v1.2h-1.2zM1174 852.2h1.2v1.2h-1.2zM1209 852.2h1.2v1.2h-1.2zM1244 852.2h1.2v1.2h-1.2zM1314 852.2h1.2v1.2h-1.2zM1349 852.2h1.2v1.2h-1.2zM1384 852.2h1.2v1.2h-1.2zM1419 852.2h1.2v1.2h-1.2zM1489 852.2h1.2v1.2h-1.2zM1524 852.2h1.2v1.2h-1.2zM1559 852.2h1.2v1.2h-1.2zM1594 852.2h1.2v1.2h-1.2zM1664 852.2h1.2v1.2h-1.2zM1699 852.2h1.2v1.2h-1.2zM1734 852.2h1.2v1.2h-1.2zM20 881.8h1.2v1.2h-1.2zM90 881.8h1.2v1.2h-1.2zM125 881.8h1.2v1.2h-1.2zM160 881.8h1.2v1.2h-1.2zM195 881.8h1.2v1.2h-1.2zM265 881.8h1.2v1.2h-1.2zM300 881.8h1.2v1.2h-1.2zM335 881.8h1.2v1.2h-1.2zM370 881.8h1.2v1.2h-1.2zM440 881.8h1.2v1.2h-1.2zM475 881.8h1.2v1.2h-1.2zM510 881.8h1.2v1.2h-1.2zM545 881.8h1.2v1.2h-1.2zM615 881.8h1.2v1.2h-1.2zM650 881.8h1.2v1.2h-1.2zM685 881.8h1.2v1.2h-1.2zM720 881.8h1.2v1.2h-1.2zM790 881.8h1.2v1.2h-1.2zM825 881.8h1.2v1.2h-1.2zM860 881.8h1.2v1.2h-1.2zM894 881.8h1.2v1.2h-1.2zM964 881.8h1.2v1.2h-1.2zM999 881.8h1.2v1.2h-1.2zM1034 881.8h1.2v1.2h-1.2zM1069 881.8h1.2v1.2h-1.2zM1139 881.8h1.2v1.2h-1.2zM1174 881.8h1.2v1.2h-1.2zM1209 881.8h1.2v1.2h-1.2zM1244 881.8h1.2v1.2h-1.2zM1314 881.8h1.2v1.2h-1.2zM1349 881.8h1.2v1.2h-1.2zM1384 881.8h1.2v1.2h-1.2zM1419 881.8h1.2v1.2h-1.2zM1489 881.8h1.2v1.2h-1.2zM1524 881.8h1.2v1.2h-1.2zM1559 881.8h1.2v1.2h-1.2zM1594 881.8h1.2v1.2h-1.2zM1664 881.8h1.2v1.2h-1.2zM1699 881.8h1.2v1.2h-1.2zM1734 881.8h1.2v1.2h-1.2zM20 893.4h1.2v1.2h-1.2zM90 893.4h1.2v1.2h-1.2zM125 893.4h1.2v1.2h-1.2zM160 893.4h1.2v1.2h-1.2zM195 893.4h1.2v1.2h-1.2zM265 893.4h1.2v1.2h-1.2zM300 893.4h1.2v1.2h-1.2zM335 893.4h1.2v1.2h-1.2zM370 893.4h1.2v1.2h-1.2zM440 893.4h1.2v1.2h-1.2zM475 893.4h1.2v1.2h-1.2zM510 893.4h1.2v1.2h-1.2zM545 893.4h1.2v1.2h-1.2zM615 893.4h1.2v1.2h-1.2zM650 893.4h1.2v1.2h-1.2zM685 893.4h1.2v1.2h-1.2zM720 893.4h1.2v1.2h-1.2zM790 893.4h1.2v1.2h-1.2zM825 893.4h1.2v1.2h-1.2zM860 893.4h1.2v1.2h-1.2zM894 893.4h1.2v1.2h-1.2zM964 893.4h1.2v1.2h-1.2zM999 893.4h1.2v1.2h-1.2zM1034 893.4h1.2v1.2h-1.2zM1069 893.4h1.2v1.2h-1.2zM1139 893.4h1.2v1.2h-1.2zM1174 893.4h1.2v1.2h-1.2zM1209 893.4h1.2v1.2h-1.2zM1244 893.4h1.2v1.2h-1.2zM1314 893.4h1.2v1.2h-1.2zM1349 893.4h1.2v1.2h-1.2zM1384 893.4h1.2v1.2h-1.2zM1419 893.4h1.2v1.2h-1.2zM1489 893.4h1.2v1.2h-1.2zM1524 893.4h1.2v1.2h-1.2zM1559 893.4h1.2v1.2h-1.2zM1594 893.4h1.2v1.2h-1.2zM1664 893.4h1.2v1.2h-1.2zM1699 893.4h1.2v1.2h-1.2zM1734 893.4h1.2v1.2h-1.2zM20 905.0h1.2v1.2h-1.2zM90 905.0h1.2v1.2h-1.2zM125 905.0h1.2v1.2h-1.2zM160 905.0h1.2v1.2h-1.2zM195 905.0h1.2v1.2h-1.2zM265 905.0h1.2v1.2h-1.2zM300 905.0h1.2v1.2h-1.2zM335 905.0h1.2v1.2h-1.2zM370 905.0h1.2v1.2h-1.2zM440 905.0h1.2v1.2h-1.2zM475 905.0h1.2v1.2h-1.2zM510 905.0h1.2v1.2h-1.2zM545 905.0h1.2v1.2h-1.2zM615 905.0h1.2v1.2h-1.2zM650 905.0h1.2v1.2h-1.2zM685 905.0h1.2v1.2h-1.2zM720 905.0h1.2v1.2h-1.2zM790 905.0h1.2v1.2h-1.2zM825 905.0h1.2v1.2h-1.2zM860 905.0h1.2v1.2h-1.2zM894 905.0h1.2v1.2h-1.2zM964 905.0h1.2v1.2h-1.2zM999 905.0h1.2v1.2h-1.2zM1034 905.0h1.2v1.2h-1.2zM1069 905.0h1.2v1.2h-1.2zM1139 905.0h1.2v1.2h-1.2zM1174 905.0h1.2v1.2h-1.2zM1209 905.0h1.2v1.2h-1.2zM1244 905.0h1.2v1.2h-1.2zM1314 905.0h1.2v1.2h-1.2zM1349 905.0h1.2v1.2h-1.2zM1384 905.0h1.2v1.2h-1.2zM1419 905.0h1.2v1.2h-1.2zM1489 905.0h1.2v1.2h-1.2zM1524 905.0h1.2v1.2h-1.2zM1559 905.0h1.2v1.2h-1.2zM1594 905.0h1.2v1.2h-1.2zM1664 905.0h1.2v1.2h-1.2zM20 916.6h1.2v1.2h-1.2zM90 916.6h1.2v1.2h-1.2zM125 916.6h1.2v1.2h-1.2zM160 916.6h1.2v1.2h-1.2zM195 916.6h1.2v1.2h-1.2zM265 916.6h1.2v1.2h-1.2zM300 916.6h1.2v1.2h-1.2zM335 916.6h1.2v1.2h-1.2zM370 916.6h1.2v1.2h-1.2zM440 916.6h1.2v1.2h-1.2zM475 916.6h1.2v1.2h-1.2zM510 916.6h1.2v1.2h-1.2zM545 916.6h1.2v1.2h-1.2zM615 916.6h1.2v1.2h-1.2zM650 916.6h1.2v1.2h-1.2zM685 916.6h1.2v1.2h-1.2zM720 916.6h1.2v1.2h-1.2zM790 916.6h1.2v1.2h-1.2zM825 916.6h1.2v1.2h-1.2zM860 916.6h1.2v1.2h-1.2zM894 916.6h1.2v1.2h-1.2zM964 916.6h1.2v1.2h-1.2zM999 916.6h1.2v1.2h-1.2zM1034 916.6h1.2v1.2h-1.2zM1069 916.6h1.2v1.2h-1.2zM1139 916.6h1.2v1.2h-1.2zM1174 916.6h1.2v1.2h-1.2zM1209 916.6h1.2v1.2h-1.2zM1244 916.6h1.2v1.2h-1.2zM1314 916.6h1.2v1.2h-1.2zM1349 916.6h1.2v1.2h-1.2zM1384 916.6h1.2v1.2h-1.2zM1419 916.6h1.2v1.2h-1.2zM1489 916.6h1.2v1.2h-1.2zM1524 916.6h1.2v1.2h-1.2zM1559 916.6h1.2v1.2h-1.2zM1594 916.6h1.2v1.2h-1.2zM1664 916.6h1.2v1.2h-1.2zM1699 916.6h1.2v1.2h-1.2zM1734 916.6h1.2v1.2h-1.2zM20 928.2h1.2v1.2h-1.2zM90 928.2h1.2v1.2h-1.2zM125 928.2h1.2v1.2h-1.2zM160 928.2h1.2v1.2h-1.2zM195 928.2h1.2v1.2h-1.2zM265 928.2h1.2v1.2h-1.2zM300 928.2h1.2v1.2h-1.2zM335 928.2h1.2v1.2h-1.2zM370 928.2h1.2v1.2h-1.2zM440 928.2h1.2v1.2h-1.2zM475 928.2h1.2v1.2h-1.2zM510 928.2h1.2v1.2h-1.2zM545 928.2h1.2v1.2h-1.2zM615 928.2h1.2v1.2h-1.2zM650 928.2h1.2v1.2h-1.2zM685 928.2h1.2v1.2h-1.2zM720 928.2h1.2v1.2h-1.2zM790 928.2h1.2v1.2h-1.2zM825 928.2h1.2v1.2h-1.2zM860 928.2h1.2v1.2h-1.2zM894 928.2h1.2v1.2h-1.2zM964 928.2h1.2v1.2h-1.2zM999 928.2h1.2v1.2h-1.2zM1034 928.2h1.2v1.2h-1.2zM1069 928.2h1.2v1.2h-1.2zM1139 928.2h1.2v1.2h-1.2zM1174 928.2h1.2v1.2h-1.2zM1209 928.2h1.2v1.2h-1.2zM1244 928.2h1.2v1.2h-1.2zM1314 928.2h1.2v1.2h-1.2zM1349 928.2h1.2v1.2h-1.2zM1384 928.2h1.2v1.2h-1.2zM1419 928.2h1.2v1.2h-1.2zM1489 928.2h1.2v1.2h-1.2zM1524 928.2h1.2v1.2h-1.2zM1559 928.2h1.2v1.2h-1.2zM1594 928.2h1.2v1.2h-1.2zM1664 928.2h1.2v1.2h-1.2zM20 939.8h1.2v1.2h-1.2zM90 939.8h1.2v1.2h-1.2zM125 939.8h1.2v1.2h-1.2zM160 939.8h1.2v1.2h-1.2zM195 939.8h1.2v1.2h-1.2zM265 939.8h1.2v1.2h-1.2zM300 939.8h1.2v1.2h-1.2zM335 939.8h1.2v1.2h-1.2zM370 939.8h1.2v1.2h-1.2zM440 939.8h1.2v1.2h-1.2zM475 939.8h1.2v1.2h-1.2zM510 939.8h1.2v1.2h-1.2zM545 939.8h1.2v1.2h-1.2zM615 939.8h1.2v1.2h-1.2zM650 939.8h1.2v1.2h-1.2zM685 939.8h1.2v1.2h-1.2zM720 939.8h1.2v1.2h-1.2zM790 939.8h1.2v1.2h-1.2zM825 939.8h1.2v1.2h-1.2zM860 939.8h1.2v1.2h-1.2zM894 939.8h1.2v1.2h-1.2zM964 939.8h1.2v1.2h-1.2zM999 939.8h1.2v1.2h-1.2zM1034 939.8h1.2v1.2h-1.2zM1069 939.8h1.2v1.2h-1.2zM1139 939.8h1.2v1.2h-1.2zM1174 939.8h1.2v1.2h-1.2zM1209 939.8h1.2v1.2h-1.2zM1244 939.8h1.2v1.2h-1.2zM1314 939.8h1.2v1.2h-1.2zM1349 939.8h1.2v1.2h-1.2zM1384 939.8h1.2v1.2h-1.2zM1419 939.8h1.2v1.2h-1.2zM1489 939.8h1.2v1.2h-1.2zM1524 939.8h1.2v1.2h-1.2zM1559 939.8h1.2v1.2h-1.2zM1594 939.8h1.2v1.2h-1.2zM1664 939.8h1.2v1.2h-1.2zM1699 939.8h1.2v1.2h-1.2zM1734 939.8h1.2v1.2h-1.2zM20 951.4h1.2v1.2h-1.2zM90 951.4h1.2v1.2h-1.2zM125 951.4h1.2v1.2h-1.2zM160 951.4h1.2v1.2h-1.2zM195 951.4h1.2v1.2h-1.2zM265 951.4h1.2v1.2h-1.2zM300 951.4h1.2v1.2h-1.2zM335 951.4h1.2v1.2h-1.2zM370 951.4h1.2v1.2h-1.2zM440 951.4h1.2v1.2h-1.2zM475 951.4h1.2v1.2h-1.2zM510 951.4h1.2v1.2h-1.2zM545 951.4h1.2v1.2h-1.2zM615 951.4h1.2v1.2h-1.2zM650 951.4h1.2v1.2h-1.2zM685 951.4h1.2v1.2h-1.2zM720 951.4h1.2v1.2h-1.2zM790 951.4h1.2v1.2h-1.2zM825 951.4h1.2v1.2h-1.2zM860 951.4h1.2v1.2h-1.2zM894 951.4h1.2v1.2h-1.2zM964 951.4h1.2v1.2h-1.2zM999 951.4h1.2v1.2h-1.2zM1034 951.4h1.2v1.2h-1.2zM1069 951.4h1.2v1.2h-1.2zM1139 951.4h1.2v1.2h-1.2zM1174 951.4h1.2v1.2h-1.2zM1209 951.4h1.2v1.2h-1.2zM1244 951.4h1.2v1.2h-1.2zM1314 951.4h1.2v1.2h-1.2zM1349 951.4h1.2v1.2h-1.2zM1384 951.4h1.2v1.2h-1.2zM1419 951.4h1.2v1.2h-1.2zM1489 951.4h1.2v1.2h-1.2zM1524 951.4h1.2v1.2h-1.2zM1559 951.4h1.2v1.2h-1.2zM1594 951.4h1.2v1.2h-1.2zM1664 951.4h1.2v1.2h-1.2zM20 963.0h1.2v1.2h-1.2zM90 963.0h1.2v1.2h-1.2zM125 963.0h1.2v1.2h-1.2zM160 963.0h1.2v1.2h-1.2zM195 963.0h1.2v1.2h-1.2zM265 963.0h1.2v1.2h-1.2zM300 963.0h1.2v1.2h-1.2zM335 963.0h1.2v1.2h-1.2zM370 963.0h1.2v1.2h-1.2zM440 963.0h1.2v1.2h-1.2zM475 963.0h1.2v1.2h-1.2zM510 963.0h1.2v1.2h-1.2zM545 963.0h1.2v1.2h-1.2zM615 963.0h1.2v1.2h-1.2zM650 963.0h1.2v1.2h-1.2zM685 963.0h1.2v1.2h-1.2zM720 963.0h1.2v1.2h-1.2zM790 963.0h1.2v1.2h-1.2zM825 963.0h1.2v1.2h-1.2zM860 963.0h1.2v1.2h-1.2zM894 963.0h1.2v1.2h-1.2zM964 963.0h1.2v1.2h-1.2zM999 963.0h1.2v1.2h-1.2zM1034 963.0h1.2v1.2h-1.2zM1069 963.0h1.2v1.2h-1.2zM1139 963.0h1.2v1.2h-1.2zM1174 963.0h1.2v1.2h-1.2zM1209 963.0h1.2v1.2h-1.2zM1244 963.0h1.2v1.2h-1.2zM1314 963.0h1.2v1.2h-1.2zM1349 963.0h1.2v1.2h-1.2zM1384 963.0h1.2v1.2h-1.2zM1419 963.0h1.2v1.2h-1.2zM1489 963.0h1.2v1.2h-1.2zM1524 963.0h1.2v1.2h-1.2zM1559 963.0h1.2v1.2h-1.2zM1594 963.0h1.2v1.2h-1.2zM1664 963.0h1.2v1.2h-1.2zM1699 963.0h1.2v1.2h-1.2zM1734 963.0h1.2v1.2h-1.2zM20 986.2h1.2v1.2h-1.2zM90 986.2h1.2v1.2h-1.2zM125 986.2h1.2v1.2h-1.2zM160 986.2h1.2v1.2h-1.2zM195 986.2h1.2v1.2h-1.2zM265 986.2h1.2v1.2h-1.2zM300 986.2h1.2v1.2h-1.2zM335 986.2h1.2v1.2h-1.2zM370 986.2h1.2v1.2h-1.2zM440 986.2h1.2v1.2h-1.2zM475 986.2h1.2v1.2h-1.2zM510 986.2h1.2v1.2h-1.2zM545 986.2h1.2v1.2h-1.2zM615 986.2h1.2v1.2h-1.2zM650 986.2h1.2v1.2h-1.2zM685 986.2h1.2v1.2h-1.2zM720 986.2h1.2v1.2h-1.2zM790 986.2h1.2v1.2h-1.2zM825 986.2h1.2v1.2h-1.2zM860 986.2h1.2v1.2h-1.2zM894 986.2h1.2v1.2h-1.2zM964 986.2h1.2v1.2h-1.2zM999 986.2h1.2v1.2h-1.2zM1034 986.2h1.2v1.2h-1.2zM1069 986.2h1.2v1.2h-1.2zM1139 986.2h1.2v1.2h-1.2zM1174 986.2h1.2v1.2h-1.2zM1209 986.2h1.2v1.2h-1.2zM1244 986.2h1.2v1.2h-1.2zM1314 986.2h1.2v1.2h-1.2zM1349 986.2h1.2v1.2h-1.2zM1384 986.2h1.2v1.2h-1.2zM1419 986.2h1.2v1.2h-1.2zM1489 986.2h1.2v1.2h-1.2zM1524 986.2h1.2v1.2h-1.2zM1559 986.2h1.2v1.2h-1.2zM1594 986.2h1.2v1.2h-1.2zM1664 986.2h1.2v1.2h-1.2zM1699 986.2h1.2v1.2h-1.2zM1734 986.2h1.2v1.2h-1.2z" fill="#3a3a3a"/><line x1="230.5" y1="58" x2="230.5" y2="743" stroke="#333" stroke-width="1" stroke-dasharray="1 1" shape-rendering="crispEdges"/><line x1="230.5" y1="759" x2="230.5" y2="993" stroke="#333" stroke-width="1" stroke-dasharray="1 1" shape-rendering="crispEdges"/><line x1="405.5" y1="58" x2="405.5" y2="743" stroke="#333" stroke-width="1" stroke-dasharray="1 1" shape-rendering="crispEdges"/><line x1="405.5" y1="759" x2="405.5" y2="993" stroke="#333" stroke-width="1" stroke-dasharray="1 1" shape-rendering="crispEdges"/><line x1="580.5" y1="58" x2="580.5" y2="743" stroke="#333" stroke-width="1" stroke-dasharray="1 1" shape-rendering="crispEdges"/><line x1="580.5" y1="759" x2="580.5" y2="993" stroke="#333" stroke-width="1" stroke-dasharray="1 1" shape-rendering="crispEdges"/><line x1="755.5" y1="58" x2="755.5" y2="743" stroke="#333" stroke-width="1" stroke-dasharray="1 1" shape-rendering="crispEdges"/><line x1="755.5" y1="759" x2="755.5" y2="993" stroke="#333" stroke-width="1" stroke-dasharray="1 1" shape-rendering="crispEdges"/><line x1="929.5" y1="58" x2="929.5" y2="743" stroke="#333" stroke-width="1" stroke-dasharray="1 1" shape-rendering="crispEdges"/><line x1="929.5" y1="759" x2="929.5" y2="993" stroke="#333" stroke-width="1" stroke-dasharray="1 1" shape-rendering="crispEdges"/><line x1="1104.5" y1="58" x2="1104.5" y2="743" stroke="#333" stroke-width="1" stroke-dasharray="1 1" shape-rendering="crispEdges"/><line x1="1104.5" y1="759" x2="1104.5" y2="993" stroke="#333" stroke-width="1" stroke-dasharray="1 1" shape-rendering="crispEdges"/><line x1="1279.5" y1="58" x2="1279.5" y2="743" stroke="#333" stroke-width="1" stroke-dasharray="1 1" shape-rendering="crispEdges"/><line x1="1279.5" y1="759" x2="1279.5" y2="993" stroke="#333" stroke-width="1" stroke-dasharray="1 1" shape-rendering="crispEdges"/><line x1="1454.5" y1="58" x2="1454.5" y2="743" stroke="#333" stroke-width="1" stroke-dasharray="1 1" shape-rendering="crispEdges"/><line x1="1454.5" y1="759" x2="1454.5" y2="993" stroke="#333" stroke-width="1" stroke-dasharray="1 1" shape-rendering="crispEdges"/><line x1="1629.5" y1="58" x2="1629.5" y2="743" stroke="#333" stroke-width="1" stroke-dasharray="1 1" shape-rendering="crispEdges"/><line x1="1629.5" y1="759" x2="1629.5" y2="993" stroke="#333" stroke-width="1" stroke-dasharray="1 1" shape-rendering="crispEdges"/><line x1="55.5" y1="66" x2="55.5" y2="993" stroke="#333" stroke-width="1" stroke-dasharray="6 4"/><rect x="3" y="172.9" width="1748" height="2.2" fill="#585858"/><rect x="3" y="289.9" width="1748" height="2.2" fill="#585858"/><rect x="3" y="406.9" width="1748" height="2.2" fill="#585858"/><rect x="3" y="523.9" width="1748" height="2.2" fill="#585858"/><rect x="3" y="640.9" width="1748" height="2.2" fill="#585858"/><rect x="3" y="757.9" width="1748" height="2.2" fill="#585858"/><rect x="3" y="874.9" width="1748" height="2.2" fill="#585858"/><path d="M3.0 160.4 L55.0 160.4 L55.6 158.0 L60.0 153.5 L65.0 149.4 L75.0 142.5 L90.0 135.6 L108.8 128.1 L127.5 123.8 L146.2 121.0 L165.0 119.4 L170.0 123.1 L175.0 129.4 L183.8 135.0 L202.5 135.0 L230.0 132.8 L280.0 128.5 L336.0 122.3 L364.0 119.6 L402.0 117.8 L426.0 118.5 L449.0 121.0 L458.0 125.6 L469.5 128.5 L479.0 136.0 L488.0 143.5 L501.0 148.5 L520.0 151.0 L552.0 151.9 L640.0 153.1 L800.0 155.0 L930.0 156.0 L1105.0 158.0 L1200.0 158.5 L1480.0 159.2 L1750.0 159.8" fill="none" stroke="#000000" stroke-width="1.15" stroke-linejoin="round" /><path d="M55.0 220.2 L55.3 204.5 L56.0 214.0 L57.0 212.0 L58.0 216.0 L60.0 213.0 L62.0 217.0 L65.0 216.0 L70.0 219.0 L83.0 220.8 L88.0 221.0 L88.5 216.0 L89.0 221.2 L130.0 221.8 L147.0 222.1 L147.5 215.0 L148.0 222.3 L200.0 223.3 L405.0 227.2 L520.0 229.5 L700.0 233.8 L860.0 237.5 L1000.0 241.2 L1160.0 244.4 L1400.0 249.6 L1560.0 251.7 L1750.0 254.0" fill="none" stroke="#1fc3cc" stroke-width="1.40" stroke-linejoin="round" /><path d="M3.0 349.4 L55.0 349.4 L55.5 328.0 L56.2 387.5 L57.0 362.0 L57.8 372.0 L58.5 358.0 L60.0 360.0 L63.0 357.5 L75.0 356.3 L90.0 354.4 L110.0 352.0 L145.0 351.3 L168.0 350.4 L173.0 353.0 L180.0 353.7 L230.0 353.1 L280.0 351.3 L340.0 349.8 L405.0 347.5 L430.0 345.3 L455.0 341.9 L466.0 338.5 L476.0 337.8 L483.0 339.0 L490.0 343.4 L505.0 347.9 L520.0 349.3 L1750.0 349.4" fill="none" stroke="#e0234e" stroke-width="1.40" stroke-linejoin="round" /><path d="M3.0 477.5 L168.0 477.5 L180.0 462.5 L190.0 443.8 L196.0 438.3 L230.0 437.0 L300.0 437.5 L350.0 438.3 L405.0 440.5 L450.0 442.0 L465.0 444.5 L475.0 450.0 L490.0 460.0 L510.0 469.5 L540.0 474.5 L580.0 476.3 L640.0 477.5 L1750.0 477.6" fill="none" stroke="#7ac943" stroke-width="1.40" stroke-linejoin="round" /><path d="M42.0 583.0 L1750.0 583.0" fill="none" stroke="#f7931e" stroke-width="1.10" stroke-linejoin="round" /><path d="M3.0 744.9 L55.0 744.9 L55.5 653.4 L88.0 653.4 L88.5 648.0 L90.0 653.4 L147.0 653.4 L147.5 646.0 L149.0 653.4 L1751.0 653.4" fill="none" stroke="#2525c0" stroke-width="1.15" stroke-linejoin="round" /><rect x="9" y="744.6" width="11" height="1.8" fill="#2525c0"/><path d="M42.0 862.0 L55.0 861.8 L230.0 838.8 L405.0 817.3 L580.0 799.9 L755.0 786.6 L880.0 780.6 L930.0 778.3 L1105.0 773.3 L1280.0 772.0 L1455.0 775.0 L1630.0 780.0 L1750.0 785.7" fill="none" stroke="#e8891e" stroke-width="1.40" stroke-linejoin="round" /><path d="M3.0 970.1 L55.0 970.1 L56.0 975.0 L68.0 975.0 L80.0 973.9 L88.0 973.0 L115.0 972.0 L130.0 971.0 L142.0 969.9 L166.3 969.3 L168.3 967.2 L169.9 959.6 L171.4 949.4 L173.4 942.3 L176.5 934.2 L180.5 928.0 L183.6 917.9 L187.7 912.8 L192.8 905.6 L203.0 898.0 L211.1 890.4 L220.3 883.2 L228.5 875.5" fill="none" stroke="#6a1d8c" stroke-width="1.30" stroke-linejoin="round" /><path d="M414.5 875.5 L425.5 886.3 L433.6 889.9 L437.7 894.4 L441.8 902.6 L446.8 911.2 L451.9 920.9 L457.0 926.0 L464.2 933.1 L467.2 943.3 L473.3 956.0 L480.4 962.7 L488.6 967.2 L497.8 969.3 L520.0 970.2 L560.0 970.0 L640.0 967.5 L930.0 957.6 L1105.0 950.0 L1455.0 940.7 L1750.0 934.3" fill="none" stroke="#6a1d8c" stroke-width="1.50" stroke-linejoin="round" /><line x1="3" y1="161.8" x2="1718" y2="161.8" stroke="#3c3c3c" stroke-width="1.1" stroke-dasharray="5 5" stroke-dashoffset="0"/><line x1="3" y1="246.5" x2="1751" y2="246.5" stroke="#3c3c3c" stroke-width="1.1" stroke-dasharray="5 5" stroke-dashoffset="0"/><line x1="3" y1="349.7" x2="1724" y2="349.7" stroke="#3c3c3c" stroke-width="1.1" stroke-dasharray="5 5" stroke-dashoffset="0"/><line x1="3" y1="478.3" x2="1751" y2="478.3" stroke="#3c3c3c" stroke-width="1.1" stroke-dasharray="5 5" stroke-dashoffset="0"/><line x1="3" y1="583.3" x2="1724" y2="583.3" stroke="#3c3c3c" stroke-width="1.1" stroke-dasharray="5 5" stroke-dashoffset="0"/><line x1="3" y1="863.6" x2="1718" y2="863.6" stroke="#3c3c3c" stroke-width="1.1" stroke-dasharray="5 5" stroke-dashoffset="0"/><line x1="3" y1="975.8" x2="1718" y2="975.8" stroke="#3c3c3c" stroke-width="1.1" stroke-dasharray="5 5" stroke-dashoffset="0"/><line x1="55.5" y1="66" x2="55.5" y2="993" stroke="#333" stroke-width="1" stroke-dasharray="6 4"/><path d="M1710 64.5 L1743 64.5 L1743 98.5 Z" fill="#4b4b4b" stroke="#111" stroke-width="1.2" stroke-linejoin="round"/><circle cx="1737" cy="71.5" r="3.8" fill="none" stroke="#9a9a9a" stroke-width="1.2"/><line x1="1734.3" y1="74.3" x2="1728.5" y2="80" stroke="#9a9a9a" stroke-width="1.8" stroke-linecap="round"/><path d="M1729.4 700.6 L1741.7 690.3 L1741.7 699.2 L1751 699.2 L1751 701.9 L1741.7 701.9 L1741.7 710.7 Z" fill="#2626c4"/><path d="M46 58 L64 58 L55 67 Z" fill="#f7931e"/><path d="M45.5 643.5 h19 v21 h-6 l-3.5 6.5 l-3.5 -6.5 h-6 z" fill="#f7931e"/><path d="M48 646 h14 v16 h-4.5 l-2.5 4 l-2.5 -4 h-4.5 z" fill="#000"/><path d="M50.5 649 h9 v2.6 h-3.2 v8.4 h-2.6 v-8.4 h-3.2 z" fill="#f7931e"/></g></svg>
<svg width="1920" height="1080" style="position:absolute;left:0;top:0"><defs><clipPath id="pc2"><rect x="3" y="58" width="1748" height="935"/></clipPath></defs><g clip-path="url(#pc2)"><path d="M11.0 103.4 L77.5 103.4 L83.5 115.3 L77.5 127.2 L11.0 127.2 Q7.5 127.2 7.5 123.7 L7.5 106.9 Q7.5 103.4 11.0 103.4 Z" fill="#e6e6e6" stroke="#262626" stroke-width="2.0" stroke-linejoin="round"/><line x1="33.0" y1="103.4" x2="33.0" y2="127.2" stroke="#262626" stroke-width="2.0"/><path d="M11.0 220.7 L77.5 220.7 L83.5 232.0 L77.5 243.3 L11.0 243.3 Q7.5 243.3 7.5 239.8 L7.5 224.2 Q7.5 220.7 11.0 220.7 Z" fill="#e9f8f9" stroke="#22c4cd" stroke-width="2.0" stroke-linejoin="round"/><line x1="33.0" y1="220.7" x2="33.0" y2="243.3" stroke="#22c4cd" stroke-width="2.0"/><path d="M10.5 337.8 L31.0 337.8 L42.0 350.0 L31.0 362.2 L10.5 362.2 Q7.0 362.2 7.0 358.7 L7.0 341.3 Q7.0 337.8 10.5 337.8 Z" fill="#fde9ed" stroke="#ef6a86" stroke-width="1.5" stroke-linejoin="round"/><path d="M11.0 454.0 L77.5 454.0 L83.5 466.1 L77.5 478.3 L11.0 478.3 Q7.5 478.3 7.5 474.8 L7.5 457.5 Q7.5 454.0 11.0 454.0 Z" fill="#eff7e8" stroke="#7cc94a" stroke-width="2.0" stroke-linejoin="round"/><line x1="33.0" y1="454.0" x2="33.0" y2="478.3" stroke="#7cc94a" stroke-width="2.0"/><path d="M10.5 571.6 L31.0 571.6 L42.2 583.7 L31.0 595.8 L10.5 595.8 Q7.0 595.8 7.0 592.3 L7.0 575.1 Q7.0 571.6 10.5 571.6 Z" fill="#fff3e7" stroke="#f8b36b" stroke-width="1.5" stroke-linejoin="round"/><path d="M11.0 688.0 L77.5 688.0 L83.5 700.1 L77.5 712.3 L11.0 712.3 Q7.5 712.3 7.5 708.8 L7.5 691.5 Q7.5 688.0 11.0 688.0 Z" fill="#e6e6f6"/><path d="M11.0 688.0 L33.0 688.0 L33.0 712.3 L11.0 712.3 Q7.5 712.3 7.5 708.8 L7.5 691.5 Q7.5 688.0 11.0 688.0 Z" fill="#2a2ac6"/><path d="M11.0 688.0 L77.5 688.0 L83.5 700.1 L77.5 712.3 L11.0 712.3 Q7.5 712.3 7.5 708.8 L7.5 691.5 Q7.5 688.0 11.0 688.0 Z" fill="none" stroke="#111111" stroke-width="2.0" stroke-linejoin="round"/><line x1="33.0" y1="688.0" x2="33.0" y2="712.3" stroke="#111111" stroke-width="2.0"/><path d="M10.5 851.6 L30.5 851.6 L42.0 862.9 L30.5 874.2 L10.5 874.2 Q7.0 874.2 7.0 870.7 L7.0 855.1 Q7.0 851.6 10.5 851.6 Z" fill="#fdf1e4" stroke="#f1a553" stroke-width="1.5" stroke-linejoin="round"/><path d="M10.5 962.6 L30.5 962.6 L41.7 974.5 L30.5 986.4 L10.5 986.4 Q7.0 986.4 7.0 982.9 L7.0 966.1 Q7.0 962.6 10.5 962.6 Z" fill="#efe8f3" stroke="#8a56a8" stroke-width="1.5" stroke-linejoin="round"/></g></svg>
<div class="t" style="left:10.8px;top:110.0px;font-size:12px;color:#222;font-weight:normal;">C 1</div>
<div class="t" style="left:57.5px;top:109.4px;font-size:13px;color:#222;font-weight:normal;transform:translateX(-50%);">20 V</div>
<div class="t" style="left:10.8px;top:226.9px;font-size:12px;color:#111;font-weight:normal;">C 2</div>
<div class="t" style="left:57.0px;top:227.1px;font-size:12px;color:#111;font-weight:normal;transform:translateX(-50%);">300 mV</div>
<div class="t" style="left:23.0px;top:344.6px;font-size:12px;color:#ea4f70;font-weight:normal;transform:translateX(-50%);">C 3</div>
<div class="t" style="left:10.8px;top:461.1px;font-size:12px;color:#111;font-weight:normal;">C 4</div>
<div class="t" style="left:57.0px;top:461.3px;font-size:12px;color:#111;font-weight:normal;transform:translateX(-50%);">200 mV</div>
<div class="t" style="left:23.0px;top:578.6px;font-size:12px;color:#111;font-weight:normal;transform:translateX(-50%);">C 5</div>
<div class="t" style="left:10.8px;top:694.9px;font-size:12px;color:#fff;font-weight:normal;">C 6</div>
<div class="t" style="left:57.5px;top:694.3px;font-size:13px;color:#3232b8;font-weight:normal;transform:translateX(-50%);">3 V</div>
<div class="t" style="left:23.0px;top:857.6px;font-size:12px;color:#111;font-weight:normal;transform:translateX(-50%);">M 1</div>
<div class="t" style="left:23.0px;top:969.9px;font-size:12px;color:#7b3fa0;font-weight:normal;transform:translateX(-50%);">M 2</div>
<div class="t" style="left:101.0px;top:106.3px;font-size:19.3px;color:#111;font-weight:normal;text-shadow:0 0.5px 0.5px #888">U_loop,coil</div>
<div class="t" style="left:102.0px;top:222.9px;font-size:19.3px;color:#1ec3cc;font-weight:normal;text-shadow:0.8px 1px 0.5px rgba(0,0,0,0.85)">U_Bt,coil</div>
<div class="t" style="left:54.0px;top:339.1px;font-size:19.3px;color:#e0234e;font-weight:normal;text-shadow:0.8px 1px 0.5px rgba(0,0,0,0.85)">U_Rog,coil</div>
<div class="t" style="left:101.5px;top:456.3px;font-size:19.3px;color:#7ac943;font-weight:normal;text-shadow:0.8px 1px 0.5px rgba(0,0,0,0.85)">U_Photod</div>
<div class="t" style="left:54.0px;top:573.8px;font-size:19.3px;color:#f7931e;font-weight:normal;text-shadow:0.8px 1px 0.5px rgba(0,0,0,0.85)">U_Diamagn</div>
<div class="t" style="left:101.0px;top:690.2px;font-size:19.8px;color:#2525c0;font-weight:normal;text-shadow:0 0.5px 0.5px rgba(0,0,0,0.5)">Trigger</div>
<div class="t" style="left:54.0px;top:848.9px;font-size:19.3px;color:#e8891e;font-weight:normal;text-shadow:0.8px 1px 0.5px rgba(0,0,0,0.85)">B_t</div>
<div class="t" style="left:55.0px;top:965.0px;font-size:19.3px;color:#6a1d8c;font-weight:normal;text-shadow:0.8px 1px 0.5px rgba(0,0,0,0.85)">I_p</div>
<div class="t" style="right:173.5px;top:84.5px;font-size:13.4px;color:#1a1a1a;font-weight:normal;text-shadow:0 0.5px 0.6px rgba(0,0,0,0.5)">30 V</div>
<div class="t" style="right:173.5px;top:108.5px;font-size:13.4px;color:#1a1a1a;font-weight:normal;text-shadow:0 0.5px 0.6px rgba(0,0,0,0.5)">20 V</div>
<div class="t" style="right:173.5px;top:131.5px;font-size:13.4px;color:#1a1a1a;font-weight:normal;text-shadow:0 0.5px 0.6px rgba(0,0,0,0.5)">10 V</div>
<div class="t" style="right:173.5px;top:154.5px;font-size:13.4px;color:#1a1a1a;font-weight:normal;text-shadow:0 0.5px 0.6px rgba(0,0,0,0.5)">0 V</div>
<div class="t" style="right:173.5px;top:182.5px;font-size:13.4px;color:#1ccbd4;font-weight:normal;text-shadow:0.7px 0.8px 0.4px rgba(0,0,0,0.9)">1.25 V</div>
<div class="t" style="right:173.5px;top:205.5px;font-size:13.4px;color:#1ccbd4;font-weight:normal;text-shadow:0.7px 0.8px 0.4px rgba(0,0,0,0.9)">750 mV</div>
<div class="t" style="right:173.5px;top:228.5px;font-size:13.4px;color:#1ccbd4;font-weight:normal;text-shadow:0.7px 0.8px 0.4px rgba(0,0,0,0.9)">250 mV</div>
<div class="t" style="right:173.5px;top:251.5px;font-size:13.4px;color:#1ccbd4;font-weight:normal;text-shadow:0.7px 0.8px 0.4px rgba(0,0,0,0.9)">-250 mV</div>
<div class="t" style="right:173.5px;top:274.5px;font-size:13.4px;color:#1ccbd4;font-weight:normal;text-shadow:0.7px 0.8px 0.4px rgba(0,0,0,0.9)">-750 mV</div>
<div class="t" style="right:173.5px;top:296.5px;font-size:13.4px;color:#d8224c;font-weight:normal;text-shadow:0.7px 0.8px 0.4px rgba(0,0,0,0.9)">1.80 V</div>
<div class="t" style="right:173.5px;top:319.5px;font-size:13.4px;color:#d8224c;font-weight:normal;text-shadow:0.7px 0.8px 0.4px rgba(0,0,0,0.9)">900 mV</div>
<div class="t" style="right:173.5px;top:342.5px;font-size:13.4px;color:#d8224c;font-weight:normal;text-shadow:0.7px 0.8px 0.4px rgba(0,0,0,0.9)">0 V</div>
<div class="t" style="right:173.5px;top:365.5px;font-size:13.4px;color:#d8224c;font-weight:normal;text-shadow:0.7px 0.8px 0.4px rgba(0,0,0,0.9)">-900 mV</div>
<div class="t" style="right:173.5px;top:388.5px;font-size:13.4px;color:#d8224c;font-weight:normal;text-shadow:0.7px 0.8px 0.4px rgba(0,0,0,0.9)">-1.80 V</div>
<div class="t" style="right:173.5px;top:413.5px;font-size:13.4px;color:#6cbf38;font-weight:normal;text-shadow:0.7px 0.8px 0.4px rgba(0,0,0,0.9)">1 V</div>
<div class="t" style="right:173.5px;top:436.5px;font-size:13.4px;color:#6cbf38;font-weight:normal;text-shadow:0.7px 0.8px 0.4px rgba(0,0,0,0.9)">600 mV</div>
<div class="t" style="right:173.5px;top:459.5px;font-size:13.4px;color:#6cbf38;font-weight:normal;text-shadow:0.7px 0.8px 0.4px rgba(0,0,0,0.9)">200 mV</div>
<div class="t" style="right:173.5px;top:482.5px;font-size:13.4px;color:#6cbf38;font-weight:normal;text-shadow:0.7px 0.8px 0.4px rgba(0,0,0,0.9)">-200 mV</div>
<div class="t" style="right:173.5px;top:505.5px;font-size:13.4px;color:#6cbf38;font-weight:normal;text-shadow:0.7px 0.8px 0.4px rgba(0,0,0,0.9)">-600 mV</div>
<div class="t" style="right:173.5px;top:530.5px;font-size:13.4px;color:#f08a18;font-weight:normal;text-shadow:0.7px 0.8px 0.4px rgba(0,0,0,0.9)">4 V</div>
<div class="t" style="right:173.5px;top:553.5px;font-size:13.4px;color:#f08a18;font-weight:normal;text-shadow:0.7px 0.8px 0.4px rgba(0,0,0,0.9)">2 V</div>
<div class="t" style="right:173.5px;top:576.5px;font-size:13.4px;color:#f08a18;font-weight:normal;text-shadow:0.7px 0.8px 0.4px rgba(0,0,0,0.9)">0 V</div>
<div class="t" style="right:173.5px;top:599.5px;font-size:13.4px;color:#f08a18;font-weight:normal;text-shadow:0.7px 0.8px 0.4px rgba(0,0,0,0.9)">-2 V</div>
<div class="t" style="right:173.5px;top:622.5px;font-size:13.4px;color:#f08a18;font-weight:normal;text-shadow:0.7px 0.8px 0.4px rgba(0,0,0,0.9)">-4 V</div>
<div class="t" style="right:173.5px;top:647.5px;font-size:13.4px;color:#2828c0;font-weight:normal;text-shadow:0.7px 0.8px 0.4px rgba(0,0,0,0.9)">6 V</div>
<div class="t" style="right:173.5px;top:670.5px;font-size:13.4px;color:#2828c0;font-weight:normal;text-shadow:0.7px 0.8px 0.4px rgba(0,0,0,0.9)">4.50 V</div>
<div class="t" style="right:173.5px;top:693.0px;font-size:13.4px;color:#2828c0;font-weight:normal;text-shadow:0.7px 0.8px 0.4px rgba(0,0,0,0.9)">3 V</div>
<div class="t" style="right:173.5px;top:716.5px;font-size:13.4px;color:#2828c0;font-weight:normal;text-shadow:0.7px 0.8px 0.4px rgba(0,0,0,0.9)">1.50 V</div>
<div class="t" style="right:173.5px;top:739.5px;font-size:13.4px;color:#2828c0;font-weight:normal;text-shadow:0.7px 0.8px 0.4px rgba(0,0,0,0.9)">0 V</div>
<div class="t" style="right:173.5px;top:764.5px;font-size:13.4px;color:#e07f14;font-weight:normal;text-shadow:0.7px 0.8px 0.4px rgba(0,0,0,0.9)">619.851 mT</div>
<div class="t" style="right:173.5px;top:787.5px;font-size:13.4px;color:#e07f14;font-weight:normal;text-shadow:0.7px 0.8px 0.4px rgba(0,0,0,0.9)">464.888 mT</div>
<div class="t" style="right:173.5px;top:810.5px;font-size:13.4px;color:#e07f14;font-weight:normal;text-shadow:0.7px 0.8px 0.4px rgba(0,0,0,0.9)">309.926 mT</div>
<div class="t" style="right:173.5px;top:833.5px;font-size:13.4px;color:#e07f14;font-weight:normal;text-shadow:0.7px 0.8px 0.4px rgba(0,0,0,0.9)">154.963 mT</div>
<div class="t" style="right:173.5px;top:856.5px;font-size:13.4px;color:#e07f14;font-weight:normal;text-shadow:0.7px 0.8px 0.4px rgba(0,0,0,0.9)">0 T</div>
<div class="t" style="right:173.5px;top:898.5px;font-size:13.4px;color:#5a1a80;font-weight:normal;text-shadow:0.7px 0.8px 0.4px rgba(0,0,0,0.9)">2.121879 kA</div>
<div class="t" style="right:173.5px;top:922.5px;font-size:13.4px;color:#5a1a80;font-weight:normal;text-shadow:0.7px 0.8px 0.4px rgba(0,0,0,0.9)">1.414586 kA</div>
<div class="t" style="right:173.5px;top:945.5px;font-size:13.4px;color:#5a1a80;font-weight:normal;text-shadow:0.7px 0.8px 0.4px rgba(0,0,0,0.9)">707.293 A</div>
<div class="t" style="right:173.5px;top:968.5px;font-size:13.4px;color:#5a1a80;font-weight:normal;text-shadow:0.7px 0.8px 0.4px rgba(0,0,0,0.9)">0 A</div>
<div class="t" style="left:55.5px;top:741.4px;font-size:13.6px;color:#2a2a2a;font-weight:normal;transform:translateX(-50%);text-shadow:0 0.5px 0.8px rgba(0,0,0,0.5)">0 s</div>
<div class="t" style="left:230.5px;top:741.4px;font-size:13.6px;color:#2a2a2a;font-weight:normal;transform:translateX(-50%);text-shadow:0 0.5px 0.8px rgba(0,0,0,0.5)">4.5 ms</div>
<div class="t" style="left:405.5px;top:741.4px;font-size:13.6px;color:#2a2a2a;font-weight:normal;transform:translateX(-50%);text-shadow:0 0.5px 0.8px rgba(0,0,0,0.5)">9 ms</div>
<div class="t" style="left:580.5px;top:741.4px;font-size:13.6px;color:#2a2a2a;font-weight:normal;transform:translateX(-50%);text-shadow:0 0.5px 0.8px rgba(0,0,0,0.5)">13.5 ms</div>
<div class="t" style="left:755.5px;top:741.4px;font-size:13.6px;color:#2a2a2a;font-weight:normal;transform:translateX(-50%);text-shadow:0 0.5px 0.8px rgba(0,0,0,0.5)">18 ms</div>
<div class="t" style="left:929.5px;top:741.4px;font-size:13.6px;color:#2a2a2a;font-weight:normal;transform:translateX(-50%);text-shadow:0 0.5px 0.8px rgba(0,0,0,0.5)">22.5 ms</div>
<div class="t" style="left:1104.5px;top:741.4px;font-size:13.6px;color:#2a2a2a;font-weight:normal;transform:translateX(-50%);text-shadow:0 0.5px 0.8px rgba(0,0,0,0.5)">27 ms</div>
<div class="t" style="left:1279.5px;top:741.4px;font-size:13.6px;color:#2a2a2a;font-weight:normal;transform:translateX(-50%);text-shadow:0 0.5px 0.8px rgba(0,0,0,0.5)">31.5 ms</div>
<div class="t" style="left:1454.5px;top:741.4px;font-size:13.6px;color:#2a2a2a;font-weight:normal;transform:translateX(-50%);text-shadow:0 0.5px 0.8px rgba(0,0,0,0.5)">36 ms</div>
<div class="t" style="left:1629.5px;top:741.4px;font-size:13.6px;color:#2a2a2a;font-weight:normal;transform:translateX(-50%);text-shadow:0 0.5px 0.8px rgba(0,0,0,0.5)">40.5 ms</div>
<svg width="1920" height="1080" style="position:absolute;left:0;top:0"><path d="M1729.4 700.6 L1741.7 690.3 L1741.7 699.2 L1751 699.2 L1751 701.9 L1741.7 701.9 L1741.7 710.7 Z" fill="#2626c4"/><path d="M1710 64.5 L1743 64.5 L1743 98.5 Z" fill="#4b4b4b" stroke="#111" stroke-width="1.2" stroke-linejoin="round"/><circle cx="1737" cy="71.5" r="3.8" fill="none" stroke="#9a9a9a" stroke-width="1.2"/><line x1="1734.3" y1="74.3" x2="1728.5" y2="80" stroke="#9a9a9a" stroke-width="1.8" stroke-linecap="round"/></svg>
<div style="position:absolute;left:1769px;top:29px;width:160px;height:966px;border:1px solid #6d645b;box-sizing:border-box"></div>
<div class="t" style="left:1845.0px;top:31.1px;font-size:15px;color:#ececec;font-weight:bold;transform:translateX(-50%);letter-spacing:0.5px">Add New...</div>
<div style="position:absolute;left:1778px;top:54px;width:63px;height:37px;box-sizing:border-box;border:1px solid #6e655c;border-radius:6px;background:linear-gradient(#3f4041 0%,#2b2b2b 30%,#282828 80%,#1f1f1f 100%);color:#f4f4f4;font-size:15px;line-height:16px;display:flex;align-items:center;justify-content:center;text-align:center;padding-bottom:2px;font-family:'Liberation Sans', sans-serif">Cursors</div>
<div style="position:absolute;left:1850px;top:54px;width:63px;height:37px;box-sizing:border-box;border:1px solid #6e655c;border-radius:6px;background:linear-gradient(#3f4041 0%,#2b2b2b 30%,#282828 80%,#1f1f1f 100%);color:#f4f4f4;font-size:15px;line-height:16px;display:flex;align-items:center;justify-content:center;text-align:center;padding-bottom:2px;font-family:'Liberation Sans', sans-serif">Callout</div>
<div style="position:absolute;left:1778px;top:100px;width:63px;height:37px;box-sizing:border-box;border:1px solid #6e655c;border-radius:6px;background:linear-gradient(#3f4041 0%,#2b2b2b 30%,#282828 80%,#1f1f1f 100%);color:#f4f4f4;font-size:15px;line-height:16px;display:flex;align-items:center;justify-content:center;text-align:center;padding-bottom:2px;font-family:'Liberation Sans', sans-serif">Measure</div>
<div style="position:absolute;left:1850px;top:100px;width:63px;height:37px;box-sizing:border-box;border:1px solid #6e655c;border-radius:6px;background:linear-gradient(#3f4041 0%,#2b2b2b 30%,#282828 80%,#1f1f1f 100%);color:#f4f4f4;font-size:15px;line-height:16px;display:flex;align-items:center;justify-content:center;text-align:center;padding-bottom:2px;font-family:'Liberation Sans', sans-serif">Search</div>
<div style="position:absolute;left:1778px;top:146px;width:63px;height:37px;box-sizing:border-box;border:1px solid #6e655c;border-radius:6px;background:linear-gradient(#3f4041 0%,#2b2b2b 30%,#282828 80%,#1f1f1f 100%);color:#f4f4f4;font-size:15px;line-height:16px;display:flex;align-items:center;justify-content:center;text-align:center;padding-bottom:2px;font-family:'Liberation Sans', sans-serif">Results<br>Table</div>
<div style="position:absolute;left:1850px;top:146px;width:63px;height:37px;box-sizing:border-box;border:1px solid #6e655c;border-radius:6px;background:linear-gradient(#3f4041 0%,#2b2b2b 30%,#282828 80%,#1f1f1f 100%);color:#f4f4f4;font-size:15px;line-height:16px;display:flex;align-items:center;justify-content:center;text-align:center;padding-bottom:2px;font-family:'Liberation Sans', sans-serif">Plot</div>
<div style="position:absolute;left:1773px;top:189px;width:144px;height:1px;background:#6d645b"></div>
<div style="position:absolute;left:1778px;top:196px;width:63px;height:37px;box-sizing:border-box;border:1px solid #6e655c;border-radius:6px;background:linear-gradient(#3f4041 0%,#2b2b2b 30%,#282828 80%,#1f1f1f 100%);color:#f4f4f4;font-size:15px;line-height:16px;display:flex;align-items:center;justify-content:center;text-align:center;padding-bottom:2px;font-family:'Liberation Sans', sans-serif"><svg width="61" height="35" viewBox="0 0 61 35" style="position:absolute;left:0;top:0"><rect x="19.2" y="6.2" width="22.4" height="19.6" fill="none" stroke="#a6a6a6" stroke-width="1.7" stroke-dasharray="2.6 2"/><circle cx="30.8" cy="14.4" r="4.6" fill="none" stroke="#a6a6a6" stroke-width="1.7"/><line x1="27.6" y1="17.8" x2="22.8" y2="22.4" stroke="#a6a6a6" stroke-width="2.6" stroke-linecap="round"/><path d="M36.6 20.4 L44.2 26.2 L40.8 26.8 L42.8 30 L41.2 30.9 L39.2 27.7 L37 30 Z" fill="#a6a6a6"/></svg></div>
<div style="position:absolute;left:1850px;top:196px;width:63px;height:37px;box-sizing:border-box;border:1px solid #6e655c;border-radius:6px;background:linear-gradient(#3f4041 0%,#2b2b2b 30%,#282828 80%,#1f1f1f 100%);color:#f4f4f4;font-size:15px;line-height:16px;display:flex;align-items:center;justify-content:center;text-align:center;padding-bottom:2px;font-family:'Liberation Sans', sans-serif">More...</div>
<div style="position:absolute;left:1773px;top:241px;width:144px;height:1px;background:#6d645b"></div>
<svg width="12" height="30" style="position:absolute;left:1756px;top:498px"><circle cx="6" cy="5.6" r="2" fill="#c9c9c9"/><circle cx="6" cy="14.2" r="2" fill="#c9c9c9"/><circle cx="6" cy="22.8" r="2" fill="#c9c9c9"/></svg>
<div style="position:absolute;left:0;top:996px;width:1920px;height:84px;background:#2d2d2d"></div>
<div style="position:absolute;left:3px;top:984px;width:90px;height:19px;background:#1c1c1c;border-radius:4px 4px 0 0"></div>
<div class="t" style="left:8.5px;top:985.4px;font-size:14.6px;color:#e8e83c;font-weight:normal;">Ch 1</div>
<div style="position:absolute;left:3px;top:1003px;width:90px;height:2px;background:#b5bcbc"></div>
<div style="position:absolute;left:3px;top:1005px;width:90px;height:17px;background:#ff0000"></div>
<svg width="20" height="18" style="position:absolute;left:3px;top:1005px"><path d="M8 2.2 L15 15.5 L1 15.5 Z" fill="#f0e800" stroke="#5a4a8a" stroke-width="0.9" stroke-linejoin="round"/><rect x="7.3" y="6" width="1.5" height="6.5" fill="#9a9a40"/></svg>
<div class="t" style="left:19.8px;top:1004.4px;font-size:16px;color:#ffffff;font-weight:normal;">Clipping</div>
<div style="position:absolute;left:3px;top:1022px;width:90px;height:56px;background:#c8c8c8;border-radius:0 0 4px 4px"></div>
<div style="position:absolute;left:3.5px;top:1022px;width:89.5px;height:56px;border-radius:0 0 4px 4px"></div>
<div class="t" style="left:9.0px;top:1024.3px;font-size:14.6px;color:#111;font-weight:normal;">5 V/div</div>
<div class="t" style="left:9.0px;top:1043.3px;font-size:14.6px;color:#111;font-weight:normal;">1 M&Omega;</div>
<div class="t" style="left:9.0px;top:1062.3px;font-size:14.6px;color:#111;font-weight:normal;">200 kHz</div>
<div class="t" style="left:75.5px;top:1061px;font-size:10px;color:#111">B</div><div class="t" style="left:81px;top:1064px;font-size:10px;color:#111">w</div>
<div style="position:absolute;left:98.0px;top:1003px;width:90.0px;height:75.5px;background:#c8c8c8;border-radius:4px;overflow:hidden"><div style="position:absolute;left:0;top:0;width:100%;height:19px;background:#1f4447"></div><div style="position:absolute;left:0;top:19px;width:100%;height:1px;background:#a9a9a9"></div></div><div class="t" style="left:103.5px;top:1004.8px;font-size:14.6px;color:#2ad2da;font-weight:normal;">Ch 2</div><div class="t" style="left:103.5px;top:1024.3px;font-size:14.6px;color:#111;font-weight:normal;">250 mV/div</div><div class="t" style="left:103.5px;top:1043.3px;font-size:14.6px;color:#111;font-weight:normal;">1 M&Omega;</div><div class="t" style="left:103.5px;top:1062.3px;font-size:14.6px;color:#111;font-weight:normal;">200 kHz</div><div class="t" style="left:170.0px;top:1061px;font-size:10px;color:#111">B</div><div class="t" style="left:175.5px;top:1064px;font-size:10px;color:#111">w</div>
<div style="position:absolute;left:193.0px;top:1003px;width:90.0px;height:75.5px;background:#c8c8c8;border-radius:4px;overflow:hidden"><div style="position:absolute;left:0;top:0;width:100%;height:19px;background:#4a2328"></div><div style="position:absolute;left:0;top:19px;width:100%;height:1px;background:#a9a9a9"></div></div><div class="t" style="left:198.5px;top:1004.8px;font-size:14.6px;color:#f3e6e6;font-weight:normal;">Ch 3</div><div class="t" style="left:198.5px;top:1024.3px;font-size:14.6px;color:#111;font-weight:normal;">450 mV/div</div><div class="t" style="left:198.5px;top:1043.3px;font-size:14.6px;color:#111;font-weight:normal;">1 M&Omega;</div><div class="t" style="left:198.5px;top:1062.3px;font-size:14.6px;color:#111;font-weight:normal;">200 kHz</div><div class="t" style="left:265.0px;top:1061px;font-size:10px;color:#111">B</div><div class="t" style="left:270.5px;top:1064px;font-size:10px;color:#111">w</div>
<div style="position:absolute;left:288.0px;top:1003px;width:90.0px;height:75.5px;background:#c8c8c8;border-radius:4px;overflow:hidden"><div style="position:absolute;left:0;top:0;width:100%;height:19px;background:#374320"></div><div style="position:absolute;left:0;top:19px;width:100%;height:1px;background:#a9a9a9"></div></div><div class="t" style="left:293.5px;top:1004.8px;font-size:14.6px;color:#8fd23e;font-weight:normal;">Ch 4</div><div class="t" style="left:293.5px;top:1024.3px;font-size:14.6px;color:#111;font-weight:normal;">200 mV/div</div><div class="t" style="left:293.5px;top:1043.3px;font-size:14.6px;color:#111;font-weight:normal;">1 M&Omega;</div><div class="t" style="left:293.5px;top:1062.3px;font-size:14.6px;color:#111;font-weight:normal;">200 kHz</div><div class="t" style="left:360.0px;top:1061px;font-size:10px;color:#111">B</div><div class="t" style="left:365.5px;top:1064px;font-size:10px;color:#111">w</div>
<div style="position:absolute;left:383.0px;top:1003px;width:90.0px;height:75.5px;background:#c8c8c8;border-radius:4px;overflow:hidden"><div style="position:absolute;left:0;top:0;width:100%;height:19px;background:#4b3421"></div><div style="position:absolute;left:0;top:19px;width:100%;height:1px;background:#a9a9a9"></div></div><div class="t" style="left:388.5px;top:1004.8px;font-size:14.6px;color:#f7931e;font-weight:normal;">Ch 5</div><div class="t" style="left:388.5px;top:1024.3px;font-size:14.6px;color:#111;font-weight:normal;">1 V/div</div><div class="t" style="left:388.5px;top:1043.3px;font-size:14.6px;color:#111;font-weight:normal;">1 M&Omega;</div><div class="t" style="left:388.5px;top:1062.3px;font-size:14.6px;color:#111;font-weight:normal;">200 kHz</div><div class="t" style="left:455.0px;top:1061px;font-size:10px;color:#111">B</div><div class="t" style="left:460.5px;top:1064px;font-size:10px;color:#111">w</div>
<div style="position:absolute;left:478.0px;top:1003px;width:89.5px;height:75.5px;background:#c8c8c8;border-radius:4px;overflow:hidden"><div style="position:absolute;left:0;top:0;width:100%;height:19px;background:#2626c6"></div><div style="position:absolute;left:0;top:19px;width:100%;height:1px;background:#a9a9a9"></div></div><div class="t" style="left:483.5px;top:1004.8px;font-size:14.6px;color:#ffffff;font-weight:normal;">Ch 6</div><div class="t" style="left:483.5px;top:1024.3px;font-size:14.6px;color:#111;font-weight:normal;">750 mV/div</div><div class="t" style="left:483.5px;top:1043.3px;font-size:14.6px;color:#111;font-weight:normal;">1 M&Omega;</div><div class="t" style="left:483.5px;top:1062.3px;font-size:14.6px;color:#111;font-weight:normal;">200 kHz</div><div class="t" style="left:550.0px;top:1061px;font-size:10px;color:#111">B</div><div class="t" style="left:555.5px;top:1064px;font-size:10px;color:#111">w</div>
<div style="position:absolute;left:573.0px;top:1003px;width:89.7px;height:75.5px;background:#c8c8c8;border-radius:4px;overflow:hidden"><div style="position:absolute;left:0;top:0;width:100%;height:19px;background:#4b3421"></div><div style="position:absolute;left:0;top:19px;width:100%;height:1px;background:#a9a9a9"></div></div><div class="t" style="left:578.5px;top:1003.7px;font-size:16px;color:#f7931e;font-weight:normal;">Math 1</div><div class="t" style="left:578.5px;top:1024.3px;font-size:14.6px;color:#111;font-weight:bold;">77.4 mT/div</div><div class="t" style="left:578.5px;top:1043.3px;font-size:14.6px;color:#111;font-weight:normal;">Intg(Ch2)&hellip;</div>
<div style="position:absolute;left:668.0px;top:1003px;width:89.5px;height:75.5px;background:#c8c8c8;border-radius:4px;overflow:hidden"><div style="position:absolute;left:0;top:0;width:100%;height:19px;background:#2f2034"></div><div style="position:absolute;left:0;top:19px;width:100%;height:1px;background:#a9a9a9"></div></div><div class="t" style="left:673.5px;top:1003.7px;font-size:16px;color:#ffffff;font-weight:normal;">Math 2</div><div class="t" style="left:673.5px;top:1024.3px;font-size:14.6px;color:#111;font-weight:bold;">353.64 A/&hellip;</div><div class="t" style="left:673.5px;top:1043.3px;font-size:14.6px;color:#111;font-weight:normal;">-Intg(Ch3&hellip;</div>
<div style="position:absolute;left:1118.5px;top:1000px;width:1px;height:78px;background:#665e56"></div>
<div style="position:absolute;left:1129.3px;top:999.3px;width:39.4px;height:79px;box-sizing:border-box;border:1px solid #6e655c;border-radius:6px;background:linear-gradient(#3f4041 0%,#2b2b2b 25%,#282828 85%,#1f1f1f 100%)"></div><div style="position:absolute;left:1133.3px;top:1006.8px;width:31.4px;height:2.4px;background:#c0282d"></div><div class="t" style="left:1149.0px;top:1020.1px;font-size:15px;color:#f2f2f2;font-weight:normal;transform:translateX(-50%);">Add</div><div class="t" style="left:1149.0px;top:1036.1px;font-size:15px;color:#f2f2f2;font-weight:normal;transform:translateX(-50%);">New</div><div class="t" style="left:1149.0px;top:1052.1px;font-size:15px;color:#f2f2f2;font-weight:normal;transform:translateX(-50%);">Math</div>
<div style="position:absolute;left:1174.3px;top:999.3px;width:39.4px;height:79px;box-sizing:border-box;border:1px solid #6e655c;border-radius:6px;background:linear-gradient(#3f4041 0%,#2b2b2b 25%,#282828 85%,#1f1f1f 100%)"></div><div style="position:absolute;left:1178.3px;top:1006.8px;width:31.4px;height:2.4px;background:#d2d2e2"></div><div class="t" style="left:1194.0px;top:1020.1px;font-size:15px;color:#f2f2f2;font-weight:normal;transform:translateX(-50%);">Add</div><div class="t" style="left:1194.0px;top:1036.1px;font-size:15px;color:#f2f2f2;font-weight:normal;transform:translateX(-50%);">New</div><div class="t" style="left:1194.0px;top:1052.1px;font-size:15px;color:#f2f2f2;font-weight:normal;transform:translateX(-50%);">Ref</div>
<div style="position:absolute;left:1219.3px;top:999.3px;width:39.4px;height:79px;box-sizing:border-box;border:1px solid #6e655c;border-radius:6px;background:linear-gradient(#3f4041 0%,#2b2b2b 25%,#282828 85%,#1f1f1f 100%)"></div><div style="position:absolute;left:1223.3px;top:1006.8px;width:31.4px;height:2.4px;background:#d264f2"></div><div class="t" style="left:1239.0px;top:1020.1px;font-size:15px;color:#f2f2f2;font-weight:normal;transform:translateX(-50%);">Add</div><div class="t" style="left:1239.0px;top:1036.1px;font-size:15px;color:#f2f2f2;font-weight:normal;transform:translateX(-50%);">New</div><div class="t" style="left:1239.0px;top:1052.1px;font-size:15px;color:#f2f2f2;font-weight:normal;transform:translateX(-50%);">Bus</div>
<div style="position:absolute;left:1269px;top:1000px;width:1px;height:78px;background:#665e56"></div>
<div style="position:absolute;left:1281.0px;top:1004px;width:198.0px;height:74px;background:#c8c8c8;border-radius:4px;overflow:hidden;box-shadow:0 0 0 1px #1a1a1a"><div style="position:absolute;left:0;top:0;width:100%;height:18.6px;background:#5b5b5d"></div><div style="position:absolute;left:0;top:18.6px;width:100%;height:1.4px;background:#9a9a9a"></div></div><div class="t" style="left:1286.5px;top:1005.1px;font-size:16px;color:#ececec;font-weight:normal;">Horizontal</div>
<div class="t" style="left:1285.0px;top:1024.1px;font-size:14.6px;color:#111;font-weight:normal;">4.5 ms/div</div>
<div class="t" style="left:1391.0px;top:1024.1px;font-size:14.6px;color:#111;font-weight:normal;">45 ms</div>
<div class="t" style="left:1285.0px;top:1043.1px;font-size:14.6px;color:#111;font-weight:normal;">SR: 1 MS/s</div>
<div class="t" style="left:1391.0px;top:1043.1px;font-size:14.6px;color:#111;font-weight:normal;">1 &micro;s/pt</div>
<div class="t" style="left:1285.0px;top:1062.1px;font-size:14.6px;color:#111;font-weight:normal;">RL: 45 kpts</div>
<div class="t" style="left:1405.2px;top:1062.1px;font-size:14.6px;color:#111;font-weight:normal;">3%</div>
<svg width="12" height="14" style="position:absolute;left:1391px;top:1062px"><path d="M0.5 0.5 h9 v9 h-3 l-1.5 2.8 l-1.5 -2.8 h-3 z" fill="#f7931e"/><path d="M1.8 1.8 h6.4 v6.4 h-6.4 z" fill="#111"/><path d="M3 3 h4 v1.2 h-1.4 v3.4 h-1.2 v-3.4 h-1.4 z" fill="#fff"/></svg>
<div style="position:absolute;left:1485.6px;top:1004px;width:158.4px;height:74px;background:#c8c8c8;border-radius:4px;overflow:hidden;box-shadow:0 0 0 1px #1a1a1a"><div style="position:absolute;left:0;top:0;width:100%;height:18.6px;background:#5b5b5d"></div><div style="position:absolute;left:0;top:18.6px;width:100%;height:1.4px;background:#9a9a9a"></div></div><div class="t" style="left:1491.1px;top:1005.1px;font-size:16px;color:#ececec;font-weight:normal;">Trigger</div>
<div style="position:absolute;left:1489.8px;top:1025px;width:29.5px;height:15.6px;background:#2828c8;border:1px solid #111;box-sizing:border-box;border-radius:5px"></div>
<div class="t" style="left:1504.5px;top:1025.1px;font-size:15px;color:#ffffff;font-weight:normal;transform:translateX(-50%);">6</div>
<svg width="20" height="16" style="position:absolute;left:1529px;top:1026px"><path d="M1 11.2 H4.6 L13.9 1.4 H17" fill="none" stroke="#33339a" stroke-width="1.2"/></svg>
<div class="t" style="left:1555.9px;top:1024.1px;font-size:14.6px;color:#111;font-weight:normal;">3 V</div>
<div style="position:absolute;left:1651.0px;top:1004px;width:148.0px;height:74px;background:#c8c8c8;border-radius:4px;overflow:hidden;box-shadow:0 0 0 1px #1a1a1a"><div style="position:absolute;left:0;top:0;width:100%;height:18.6px;background:#5b5b5d"></div><div style="position:absolute;left:0;top:18.6px;width:100%;height:1.4px;background:#9a9a9a"></div></div><div class="t" style="left:1656.5px;top:1005.1px;font-size:16px;color:#ececec;font-weight:normal;">Acquisition</div>
<div class="t" style="left:1655.0px;top:1024.1px;font-size:14.6px;color:#111;font-weight:normal;">Manual,</div>
<div class="t" style="left:1736.0px;top:1024.1px;font-size:14.6px;color:#111;font-weight:normal;">Analyze</div>
<div class="t" style="left:1655.0px;top:1043.3px;font-size:14.4px;color:#111;font-weight:normal;">High Res: 16 bits</div>
<div class="t" style="left:1655.0px;top:1062.1px;font-size:14.6px;color:#111;font-weight:normal;">Single: 1 /1</div>
<div style="position:absolute;left:1811px;top:1000px;width:1px;height:80px;background:#555"></div>
<div style="position:absolute;left:1822px;top:999.5px;width:90px;height:35px;background:#f21d25;border:1px solid #b0b0b0;box-sizing:border-box;border-radius:6px"></div>
<div class="t" style="left:1867.0px;top:1008.5px;font-size:14px;color:#ffffff;font-weight:bold;transform:translateX(-50%);">Stopped</div>
<div style="position:absolute;left:1822px;top:1040.3px;width:90px;height:37.7px;background:#c8c8c8;border-radius:5px"></div>
<div class="t" style="left:1824.5px;top:1042.1px;font-size:15.3px;color:#111;font-weight:normal;">27 Aug 2025</div>
<div class="t" style="left:1824.5px;top:1058.6px;font-size:15.8px;color:#111;font-weight:normal;">11:11:38 AM</div>
</body></html>
